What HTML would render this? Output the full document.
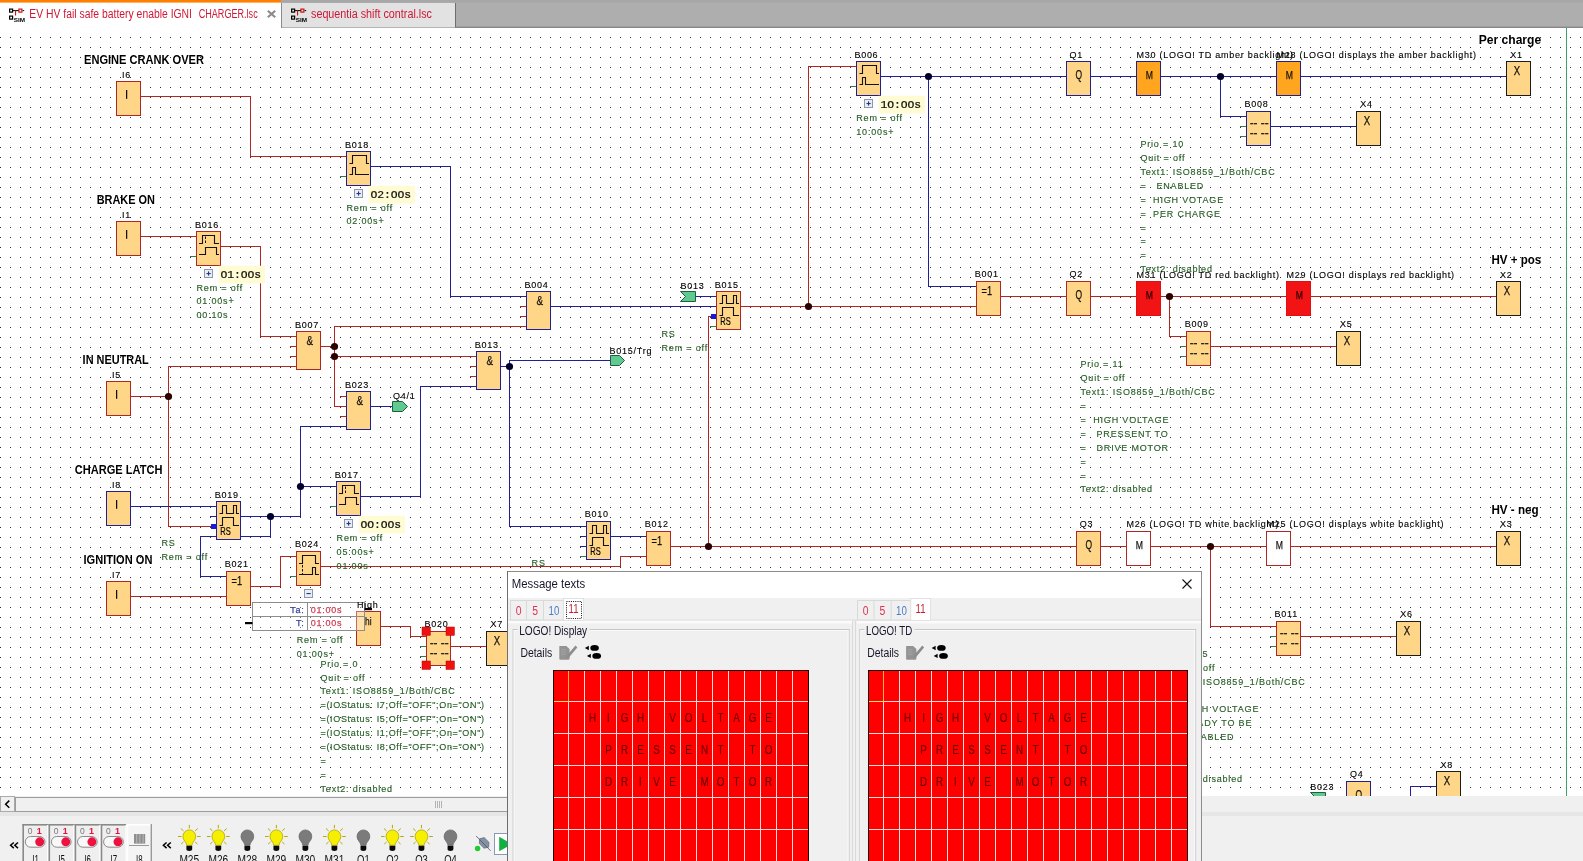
<!DOCTYPE html>
<html><head><meta charset="utf-8"><title>LOGO!Soft Comfort</title>
<style>
html,body{margin:0;padding:0;background:#fff;overflow:hidden}
body{width:1583px;height:861px;font-family:"Liberation Sans",sans-serif}

</style></head><body>
<svg width="1583" height="861" viewBox="0 0 1583 861" style="display:block">
<defs>
<pattern id="grid" x="0" y="7" width="10" height="10" patternUnits="userSpaceOnUse"><rect x="0" y="0" width="1" height="1" fill="#2e2e2e"/></pattern>
<filter id="soft" x="-5%" y="-10%" width="110%" height="120%"><feGaussianBlur stdDeviation="0.7"/></filter>
<clipPath id="canvasclip"><rect x="0" y="28" width="1583" height="768"/></clipPath>
</defs>
<rect x="0" y="0" width="1583" height="861" fill="#fff"/>
<g opacity="0.999">
<rect x="0" y="37" width="1583" height="759" fill="url(#grid)"/>
<g clip-path="url(#canvasclip)">
<rect x="1566" y="28" width="1" height="769" fill="#3aa06e"/>
<rect x="141" y="96" width="110" height="1" fill="#af2723"/>
<rect x="250" y="96" width="1" height="61" fill="#af2723"/>
<rect x="250" y="156" width="96" height="1" fill="#af2723"/>
<rect x="141" y="236" width="55" height="1" fill="#af2723"/>
<rect x="221" y="246" width="40" height="1" fill="#af2723"/>
<rect x="260" y="246" width="1" height="91" fill="#af2723"/>
<rect x="260" y="336" width="36" height="1" fill="#af2723"/>
<rect x="290" y="346" width="6" height="1" fill="#af2723"/>
<rect x="290" y="356" width="6" height="1" fill="#af2723"/>
<rect x="131" y="396" width="38" height="1" fill="#af2723"/>
<rect x="168" y="366" width="128" height="1" fill="#af2723"/>
<rect x="168" y="366" width="1" height="161" fill="#af2723"/>
<rect x="168" y="526" width="44" height="1" fill="#af2723"/>
<rect x="321" y="346" width="14" height="1" fill="#af2723"/>
<rect x="334" y="326" width="192" height="1" fill="#af2723"/>
<rect x="334" y="326" width="1" height="81" fill="#af2723"/>
<rect x="334" y="406" width="12" height="1" fill="#af2723"/>
<rect x="334" y="356" width="142" height="1" fill="#af2723"/>
<rect x="340" y="396" width="6" height="1" fill="#af2723"/>
<rect x="340" y="416" width="6" height="1" fill="#af2723"/>
<rect x="520" y="306" width="6" height="1" fill="#af2723"/>
<rect x="520" y="316" width="6" height="1" fill="#af2723"/>
<rect x="470" y="366" width="6" height="1" fill="#af2723"/>
<rect x="470" y="376" width="6" height="1" fill="#af2723"/>
<rect x="741" y="306" width="235" height="1" fill="#af2723"/>
<rect x="808" y="66" width="48" height="1" fill="#af2723"/>
<rect x="808" y="66" width="1" height="241" fill="#af2723"/>
<rect x="1001" y="296" width="65" height="1" fill="#af2723"/>
<rect x="1091" y="296" width="45" height="1" fill="#af2723"/>
<rect x="1161" y="296" width="125" height="1" fill="#af2723"/>
<rect x="1169" y="296" width="1" height="41" fill="#af2723"/>
<rect x="1169" y="336" width="17" height="1" fill="#af2723"/>
<rect x="1311" y="296" width="185" height="1" fill="#af2723"/>
<rect x="1211" y="346" width="125" height="1" fill="#af2723"/>
<rect x="708" y="316" width="4" height="1" fill="#af2723"/>
<rect x="708" y="316" width="1" height="231" fill="#af2723"/>
<rect x="671" y="546" width="405" height="1" fill="#af2723"/>
<rect x="1101" y="546" width="25" height="1" fill="#af2723"/>
<rect x="1151" y="546" width="115" height="1" fill="#af2723"/>
<rect x="1291" y="546" width="205" height="1" fill="#af2723"/>
<rect x="1210" y="546" width="1" height="81" fill="#af2723"/>
<rect x="1210" y="626" width="66" height="1" fill="#af2723"/>
<rect x="1301" y="636" width="95" height="1" fill="#af2723"/>
<rect x="131" y="596" width="95" height="1" fill="#af2723"/>
<rect x="251" y="586" width="30" height="1" fill="#af2723"/>
<rect x="280" y="556" width="1" height="31" fill="#af2723"/>
<rect x="280" y="556" width="16" height="1" fill="#af2723"/>
<rect x="321" y="566" width="300" height="1" fill="#af2723"/>
<rect x="620" y="556" width="1" height="11" fill="#af2723"/>
<rect x="620" y="556" width="26" height="1" fill="#af2723"/>
<rect x="381" y="626" width="30" height="1" fill="#af2723"/>
<rect x="410" y="626" width="1" height="11" fill="#af2723"/>
<rect x="410" y="636" width="16" height="1" fill="#af2723"/>
<rect x="451" y="646" width="35" height="1" fill="#af2723"/>
<rect x="371" y="166" width="80" height="1" fill="#1f1f98"/>
<rect x="450" y="166" width="1" height="131" fill="#1f1f98"/>
<rect x="450" y="296" width="76" height="1" fill="#1f1f98"/>
<rect x="551" y="306" width="165" height="1" fill="#1f1f98"/>
<rect x="696" y="296" width="20" height="1" fill="#1f1f98"/>
<rect x="501" y="366" width="9" height="1" fill="#1f1f98"/>
<rect x="509" y="360" width="101" height="1" fill="#1f1f98"/>
<rect x="509" y="360" width="1" height="167" fill="#1f1f98"/>
<rect x="509" y="526" width="77" height="1" fill="#1f1f98"/>
<rect x="420" y="386" width="56" height="1" fill="#1f1f98"/>
<rect x="420" y="386" width="1" height="111" fill="#1f1f98"/>
<rect x="361" y="496" width="60" height="1" fill="#1f1f98"/>
<rect x="371" y="406" width="22" height="1" fill="#1f1f98"/>
<rect x="300" y="426" width="46" height="1" fill="#1f1f98"/>
<rect x="300" y="426" width="1" height="91" fill="#1f1f98"/>
<rect x="241" y="516" width="60" height="1" fill="#1f1f98"/>
<rect x="300" y="486" width="36" height="1" fill="#1f1f98"/>
<rect x="270" y="516" width="1" height="21" fill="#1f1f98"/>
<rect x="200" y="536" width="71" height="1" fill="#1f1f98"/>
<rect x="200" y="536" width="1" height="41" fill="#1f1f98"/>
<rect x="200" y="576" width="26" height="1" fill="#1f1f98"/>
<rect x="131" y="506" width="85" height="1" fill="#1f1f98"/>
<rect x="210" y="516" width="6" height="1" fill="#1f1f98"/>
<rect x="580" y="536" width="6" height="1" fill="#1f1f98"/>
<rect x="580" y="546" width="6" height="1" fill="#1f1f98"/>
<rect x="611" y="536" width="35" height="1" fill="#1f1f98"/>
<rect x="881" y="76" width="185" height="1" fill="#1f1f98"/>
<rect x="928" y="76" width="1" height="211" fill="#1f1f98"/>
<rect x="928" y="286" width="48" height="1" fill="#1f1f98"/>
<rect x="1091" y="76" width="45" height="1" fill="#1f1f98"/>
<rect x="1161" y="76" width="115" height="1" fill="#1f1f98"/>
<rect x="1220" y="76" width="1" height="41" fill="#1f1f98"/>
<rect x="1220" y="116" width="26" height="1" fill="#1f1f98"/>
<rect x="1301" y="76" width="205" height="1" fill="#1f1f98"/>
<rect x="1271" y="126" width="85" height="1" fill="#1f1f98"/>
<rect x="1410" y="786" width="26" height="1" fill="#1f1f98"/>
<rect x="1410" y="786" width="1" height="15" fill="#1f1f98"/>
<rect x="340" y="176" width="6" height="1" fill="#2f7d4a"/>
<rect x="190" y="256" width="6" height="1" fill="#2f7d4a"/>
<rect x="850" y="86" width="6" height="1" fill="#2f7d4a"/>
<rect x="330" y="506" width="6" height="1" fill="#2f7d4a"/>
<rect x="290" y="576" width="6" height="1" fill="#2f7d4a"/>
<rect x="710" y="326" width="6" height="1" fill="#2f7d4a"/>
<rect x="580" y="556" width="6" height="1" fill="#2f7d4a"/>
<rect x="1240" y="126" width="6" height="1" fill="#2f7d4a"/>
<rect x="1240" y="136" width="6" height="1" fill="#2f7d4a"/>
<rect x="1180" y="346" width="6" height="1" fill="#2f7d4a"/>
<rect x="1180" y="356" width="6" height="1" fill="#2f7d4a"/>
<rect x="1270" y="636" width="6" height="1" fill="#2f7d4a"/>
<rect x="1270" y="646" width="6" height="1" fill="#2f7d4a"/>
<rect x="420" y="646" width="6" height="1" fill="#2f7d4a"/>
<rect x="420" y="656" width="6" height="1" fill="#2f7d4a"/>
<rect x="711" y="314" width="5" height="5" fill="#1818e0"/>
<rect x="211" y="524" width="5" height="5" fill="#1818e0"/>
<circle cx="168.5" cy="396.5" r="3.6" fill="#2a0000"/>
<circle cx="334.5" cy="346.5" r="3.6" fill="#2a0000"/>
<circle cx="334.5" cy="356.5" r="3.6" fill="#2a0000"/>
<circle cx="808.5" cy="306.5" r="3.6" fill="#2a0000"/>
<circle cx="1169.5" cy="296.5" r="3.6" fill="#2a0000"/>
<circle cx="708.5" cy="546.5" r="3.6" fill="#2a0000"/>
<circle cx="1210.5" cy="546.5" r="3.6" fill="#2a0000"/>
<circle cx="509.5" cy="366.5" r="3.6" fill="#00002a"/>
<circle cx="300.5" cy="486.5" r="3.6" fill="#00002a"/>
<circle cx="270.5" cy="516.5" r="3.6" fill="#00002a"/>
<circle cx="928.5" cy="76.5" r="3.6" fill="#00002a"/>
<circle cx="1220.5" cy="76.5" r="3.6" fill="#00002a"/>
<text x="346.5" y="210.5" font-family="Liberation Sans" font-size="9" fill="#2c622c" letter-spacing="0.82" stroke="#2c622c" stroke-width="0.16" style="white-space:pre">Rem = off</text>
<text x="346.5" y="224.4" font-family="Liberation Sans" font-size="9" fill="#2c622c" letter-spacing="0.82" stroke="#2c622c" stroke-width="0.16" style="white-space:pre">02:00s+</text>
<text x="196.5" y="290.5" font-family="Liberation Sans" font-size="9" fill="#2c622c" letter-spacing="0.82" stroke="#2c622c" stroke-width="0.16" style="white-space:pre">Rem = off</text>
<text x="196.5" y="304.4" font-family="Liberation Sans" font-size="9" fill="#2c622c" letter-spacing="0.82" stroke="#2c622c" stroke-width="0.16" style="white-space:pre">01:00s+</text>
<text x="196.5" y="318.4" font-family="Liberation Sans" font-size="9" fill="#2c622c" letter-spacing="0.82" stroke="#2c622c" stroke-width="0.16" style="white-space:pre">00:10s</text>
<text x="856.3" y="120.6" font-family="Liberation Sans" font-size="9" fill="#2c622c" letter-spacing="0.82" stroke="#2c622c" stroke-width="0.16" style="white-space:pre">Rem = off</text>
<text x="856.3" y="134.5" font-family="Liberation Sans" font-size="9" fill="#2c622c" letter-spacing="0.82" stroke="#2c622c" stroke-width="0.16" style="white-space:pre">10:00s+</text>
<text x="661.5" y="336.6" font-family="Liberation Sans" font-size="9" fill="#2c622c" letter-spacing="0.82" stroke="#2c622c" stroke-width="0.16" style="white-space:pre">RS</text>
<text x="661.5" y="350.6" font-family="Liberation Sans" font-size="9" fill="#2c622c" letter-spacing="0.82" stroke="#2c622c" stroke-width="0.16" style="white-space:pre">Rem = off</text>
<text x="161.5" y="546.4" font-family="Liberation Sans" font-size="9" fill="#2c622c" letter-spacing="0.82" stroke="#2c622c" stroke-width="0.16" style="white-space:pre">RS</text>
<text x="161.5" y="560.4" font-family="Liberation Sans" font-size="9" fill="#2c622c" letter-spacing="0.82" stroke="#2c622c" stroke-width="0.16" style="white-space:pre">Rem = off</text>
<text x="336.6" y="540.7" font-family="Liberation Sans" font-size="9" fill="#2c622c" letter-spacing="0.82" stroke="#2c622c" stroke-width="0.16" style="white-space:pre">Rem = off</text>
<text x="336.6" y="554.7" font-family="Liberation Sans" font-size="9" fill="#2c622c" letter-spacing="0.82" stroke="#2c622c" stroke-width="0.16" style="white-space:pre">05:00s+</text>
<text x="336.6" y="568.6" font-family="Liberation Sans" font-size="9" fill="#2c622c" letter-spacing="0.82" stroke="#2c622c" stroke-width="0.16" style="white-space:pre">01:00s</text>
<text x="296.8" y="642.5" font-family="Liberation Sans" font-size="9" fill="#2c622c" letter-spacing="0.82" stroke="#2c622c" stroke-width="0.16" style="white-space:pre">Rem = off</text>
<text x="296.8" y="656.5" font-family="Liberation Sans" font-size="9" fill="#2c622c" letter-spacing="0.82" stroke="#2c622c" stroke-width="0.16" style="white-space:pre">01:00s+</text>
<text x="531.6" y="565.8" font-family="Liberation Sans" font-size="9" fill="#2c622c" letter-spacing="0.82" stroke="#2c622c" stroke-width="0.16" style="white-space:pre">RS</text>
<text x="531.6" y="579.8" font-family="Liberation Sans" font-size="9" fill="#2c622c" letter-spacing="0.82" stroke="#2c622c" stroke-width="0.16" style="white-space:pre">Rem = off</text>
<text x="1140.4" y="146.8" font-family="Liberation Sans" font-size="9" fill="#2c622c" letter-spacing="0.82" stroke="#2c622c" stroke-width="0.16" style="white-space:pre">Prio = 10</text>
<text x="1140.4" y="160.8" font-family="Liberation Sans" font-size="9" fill="#2c622c" letter-spacing="0.82" stroke="#2c622c" stroke-width="0.16" style="white-space:pre">Quit = off</text>
<text x="1140.4" y="174.7" font-family="Liberation Sans" font-size="9" fill="#2c622c" letter-spacing="0.82" stroke="#2c622c" stroke-width="0.16" style="white-space:pre">Text1: ISO8859_1/Both/CBC</text>
<text x="1140.4" y="188.7" font-family="Liberation Sans" font-size="9" fill="#2c622c" letter-spacing="0.82" stroke="#2c622c" stroke-width="0.16" style="white-space:pre">=   ENABLED</text>
<text x="1140.4" y="202.6" font-family="Liberation Sans" font-size="9" fill="#2c622c" letter-spacing="0.82" stroke="#2c622c" stroke-width="0.16" style="white-space:pre">=  HIGH VOTAGE</text>
<text x="1140.4" y="216.6" font-family="Liberation Sans" font-size="9" fill="#2c622c" letter-spacing="0.82" stroke="#2c622c" stroke-width="0.16" style="white-space:pre">=  PER CHARGE</text>
<text x="1140.4" y="230.5" font-family="Liberation Sans" font-size="9" fill="#2c622c" letter-spacing="0.82" stroke="#2c622c" stroke-width="0.16" style="white-space:pre">=</text>
<text x="1140.4" y="244.4" font-family="Liberation Sans" font-size="9" fill="#2c622c" letter-spacing="0.82" stroke="#2c622c" stroke-width="0.16" style="white-space:pre">=</text>
<text x="1140.4" y="258.4" font-family="Liberation Sans" font-size="9" fill="#2c622c" letter-spacing="0.82" stroke="#2c622c" stroke-width="0.16" style="white-space:pre">=</text>
<text x="1140.4" y="272.4" font-family="Liberation Sans" font-size="9" fill="#2c622c" letter-spacing="0.82" stroke="#2c622c" stroke-width="0.16" style="white-space:pre">Text2: disabled</text>
<text x="1080.5" y="366.9" font-family="Liberation Sans" font-size="9" fill="#2c622c" letter-spacing="0.82" stroke="#2c622c" stroke-width="0.16" style="white-space:pre">Prio = 11</text>
<text x="1080.5" y="380.8" font-family="Liberation Sans" font-size="9" fill="#2c622c" letter-spacing="0.82" stroke="#2c622c" stroke-width="0.16" style="white-space:pre">Quit = off</text>
<text x="1080.5" y="394.8" font-family="Liberation Sans" font-size="9" fill="#2c622c" letter-spacing="0.82" stroke="#2c622c" stroke-width="0.16" style="white-space:pre">Text1: ISO8859_1/Both/CBC</text>
<text x="1080.5" y="408.8" font-family="Liberation Sans" font-size="9" fill="#2c622c" letter-spacing="0.82" stroke="#2c622c" stroke-width="0.16" style="white-space:pre">=</text>
<text x="1080.5" y="422.7" font-family="Liberation Sans" font-size="9" fill="#2c622c" letter-spacing="0.82" stroke="#2c622c" stroke-width="0.16" style="white-space:pre">=  HIGH VOLTAGE</text>
<text x="1080.5" y="436.6" font-family="Liberation Sans" font-size="9" fill="#2c622c" letter-spacing="0.82" stroke="#2c622c" stroke-width="0.16" style="white-space:pre">=   PRESSENT TO</text>
<text x="1080.5" y="450.6" font-family="Liberation Sans" font-size="9" fill="#2c622c" letter-spacing="0.82" stroke="#2c622c" stroke-width="0.16" style="white-space:pre">=   DRIVE MOTOR</text>
<text x="1080.5" y="464.5" font-family="Liberation Sans" font-size="9" fill="#2c622c" letter-spacing="0.82" stroke="#2c622c" stroke-width="0.16" style="white-space:pre">=</text>
<text x="1080.5" y="478.5" font-family="Liberation Sans" font-size="9" fill="#2c622c" letter-spacing="0.82" stroke="#2c622c" stroke-width="0.16" style="white-space:pre">=</text>
<text x="1080.5" y="492.4" font-family="Liberation Sans" font-size="9" fill="#2c622c" letter-spacing="0.82" stroke="#2c622c" stroke-width="0.16" style="white-space:pre">Text2: disabled</text>
<text x="320.5" y="666.5" font-family="Liberation Sans" font-size="9" fill="#2c622c" letter-spacing="0.82" stroke="#2c622c" stroke-width="0.16" style="white-space:pre">Prio = 0</text>
<text x="320.5" y="680.5" font-family="Liberation Sans" font-size="9" fill="#2c622c" letter-spacing="0.82" stroke="#2c622c" stroke-width="0.16" style="white-space:pre">Quit = off</text>
<text x="320.5" y="694.4" font-family="Liberation Sans" font-size="9" fill="#2c622c" letter-spacing="0.82" stroke="#2c622c" stroke-width="0.16" style="white-space:pre">Text1: ISO8859_1/Both/CBC</text>
<text x="320.5" y="708.4" font-family="Liberation Sans" font-size="9" fill="#2c622c" textLength="163.5" lengthAdjust="spacing" stroke="#2c622c" stroke-width="0.16" style="white-space:pre">=(IOStatus: I7;Off=&quot;OFF&quot;;On=&quot;ON&quot;)</text>
<text x="320.5" y="722.3" font-family="Liberation Sans" font-size="9" fill="#2c622c" textLength="163.5" lengthAdjust="spacing" stroke="#2c622c" stroke-width="0.16" style="white-space:pre">=(IOStatus: I5;Off=&quot;OFF&quot;;On=&quot;ON&quot;)</text>
<text x="320.5" y="736.2" font-family="Liberation Sans" font-size="9" fill="#2c622c" textLength="163.5" lengthAdjust="spacing" stroke="#2c622c" stroke-width="0.16" style="white-space:pre">=(IOStatus: I1;Off=&quot;OFF&quot;;On=&quot;ON&quot;)</text>
<text x="320.5" y="750.2" font-family="Liberation Sans" font-size="9" fill="#2c622c" textLength="163.5" lengthAdjust="spacing" stroke="#2c622c" stroke-width="0.16" style="white-space:pre">=(IOStatus: I8;Off=&quot;OFF&quot;;On=&quot;ON&quot;)</text>
<text x="320.5" y="764.1" font-family="Liberation Sans" font-size="9" fill="#2c622c" letter-spacing="0.82" stroke="#2c622c" stroke-width="0.16" style="white-space:pre">=</text>
<text x="320.5" y="778.1" font-family="Liberation Sans" font-size="9" fill="#2c622c" letter-spacing="0.82" stroke="#2c622c" stroke-width="0.16" style="white-space:pre">=</text>
<text x="320.5" y="792.0" font-family="Liberation Sans" font-size="9" fill="#2c622c" letter-spacing="0.82" stroke="#2c622c" stroke-width="0.16" style="white-space:pre">Text2: disabled</text>
<text x="1170.5" y="656.6" font-family="Liberation Sans" font-size="9" fill="#2c622c" letter-spacing="0.82" stroke="#2c622c" stroke-width="0.16" style="white-space:pre">Prio = 5</text>
<text x="1170.5" y="670.6" font-family="Liberation Sans" font-size="9" fill="#2c622c" letter-spacing="0.82" stroke="#2c622c" stroke-width="0.16" style="white-space:pre">Quit = off</text>
<text x="1170.5" y="684.5" font-family="Liberation Sans" font-size="9" fill="#2c622c" letter-spacing="0.82" stroke="#2c622c" stroke-width="0.16" style="white-space:pre">Text1: ISO8859_1/Both/CBC</text>
<text x="1170.5" y="698.5" font-family="Liberation Sans" font-size="9" fill="#2c622c" letter-spacing="0.82" stroke="#2c622c" stroke-width="0.16" style="white-space:pre">=</text>
<text x="1170.5" y="712.4" font-family="Liberation Sans" font-size="9" fill="#2c622c" letter-spacing="0.82" stroke="#2c622c" stroke-width="0.16" style="white-space:pre">=  HIGH VOLTAGE</text>
<text x="1170.5" y="726.4" font-family="Liberation Sans" font-size="9" fill="#2c622c" letter-spacing="0.82" stroke="#2c622c" stroke-width="0.16" style="white-space:pre">=  READY TO BE</text>
<text x="1170.5" y="740.3" font-family="Liberation Sans" font-size="9" fill="#2c622c" letter-spacing="0.82" stroke="#2c622c" stroke-width="0.16" style="white-space:pre">=   ENABLED</text>
<text x="1170.5" y="754.2" font-family="Liberation Sans" font-size="9" fill="#2c622c" letter-spacing="0.82" stroke="#2c622c" stroke-width="0.16" style="white-space:pre">=</text>
<text x="1170.5" y="768.2" font-family="Liberation Sans" font-size="9" fill="#2c622c" letter-spacing="0.82" stroke="#2c622c" stroke-width="0.16" style="white-space:pre">=</text>
<text x="1170.5" y="782.1" font-family="Liberation Sans" font-size="9" fill="#2c622c" letter-spacing="0.82" stroke="#2c622c" stroke-width="0.16" style="white-space:pre">Text2: disabled</text>
<rect x="116.5" y="81.5" width="24" height="34" fill="#ffd688" stroke="#af2723" stroke-width="1" shape-rendering="crispEdges"/>
<rect x="126" y="90" width="1.25" height="8.8" fill="#111"/>
<rect x="116.5" y="221.5" width="24" height="34" fill="#ffd688" stroke="#af2723" stroke-width="1" shape-rendering="crispEdges"/>
<rect x="126" y="230" width="1.25" height="8.8" fill="#111"/>
<rect x="106.5" y="381.5" width="24" height="34" fill="#ffd688" stroke="#af2723" stroke-width="1" shape-rendering="crispEdges"/>
<rect x="116" y="390" width="1.25" height="8.8" fill="#111"/>
<rect x="106.5" y="491.5" width="24" height="34" fill="#ffd688" stroke="#1f1f98" stroke-width="1" shape-rendering="crispEdges"/>
<rect x="116" y="500" width="1.25" height="8.8" fill="#111"/>
<rect x="106.5" y="581.5" width="24" height="34" fill="#ffd688" stroke="#af2723" stroke-width="1" shape-rendering="crispEdges"/>
<rect x="116" y="590" width="1.25" height="8.8" fill="#111"/>
<rect x="346.5" y="151.5" width="24" height="34" fill="#ffd688" stroke="#1f1f98" stroke-width="1" shape-rendering="crispEdges"/>
<path d="M349.5,163.5H352.5V155.5H366.5V163.5H369 M349.5,174.5H352.5V167.5H355.5V174.5H369" fill="none" stroke="#111" stroke-width="1.1"/>
<rect x="196.5" y="231.5" width="24" height="34" fill="#ffd688" stroke="#af2723" stroke-width="1" shape-rendering="crispEdges"/>
<path d="M199,243.5H202.5V235.5H214.5V243.5H219 M199,254.5H205.5V247.5H216.5V254.5H219" fill="none" stroke="#111" stroke-width="1.1"/>
<path d="M205.5,236.5V244" fill="none" stroke="#111" stroke-width="1" stroke-dasharray="2.5,1.5"/>
<rect x="296.5" y="331.5" width="24" height="38" fill="#ffd688" stroke="#af2723" stroke-width="1" shape-rendering="crispEdges"/>
<text x="306.4" y="344.5" font-family="Liberation Sans" font-size="12" fill="#111" textLength="6.6" lengthAdjust="spacingAndGlyphs" stroke="#111" stroke-width="0.25" style="white-space:pre">&amp;</text>
<rect x="346.5" y="391.5" width="24" height="38" fill="#ffd688" stroke="#1f1f98" stroke-width="1" shape-rendering="crispEdges"/>
<text x="356.4" y="404.5" font-family="Liberation Sans" font-size="12" fill="#111" textLength="6.6" lengthAdjust="spacingAndGlyphs" stroke="#111" stroke-width="0.25" style="white-space:pre">&amp;</text>
<rect x="526.5" y="291.5" width="24" height="38" fill="#ffd688" stroke="#1f1f98" stroke-width="1" shape-rendering="crispEdges"/>
<text x="536.4" y="304.5" font-family="Liberation Sans" font-size="12" fill="#111" textLength="6.6" lengthAdjust="spacingAndGlyphs" stroke="#111" stroke-width="0.25" style="white-space:pre">&amp;</text>
<rect x="476.5" y="351.5" width="24" height="38" fill="#ffd688" stroke="#1f1f98" stroke-width="1" shape-rendering="crispEdges"/>
<text x="486.4" y="364.5" font-family="Liberation Sans" font-size="12" fill="#111" textLength="6.6" lengthAdjust="spacingAndGlyphs" stroke="#111" stroke-width="0.25" style="white-space:pre">&amp;</text>
<rect x="716.5" y="291.5" width="24" height="38" fill="#ffd688" stroke="#af2723" stroke-width="1" shape-rendering="crispEdges"/>
<path d="M719.5,303.5H722.5V295.5H726.5V303.5H733.5V295.5H736.5V303.5H739 M719.5,315.5H722.5V307.5H733.5V315.5H739" fill="none" stroke="#111" stroke-width="1.1"/>
<text x="720.3" y="325" font-family="Liberation Sans" font-size="10.5" fill="#000" textLength="10.5" lengthAdjust="spacingAndGlyphs" stroke="#000" stroke-width="0.2" style="white-space:pre">RS</text>
<rect x="216.5" y="501.5" width="24" height="38" fill="#ffd688" stroke="#1f1f98" stroke-width="1" shape-rendering="crispEdges"/>
<path d="M219.5,513.5H222.5V505.5H226.5V513.5H233.5V505.5H236.5V513.5H239 M219.5,525.5H222.5V517.5H233.5V525.5H239" fill="none" stroke="#111" stroke-width="1.1"/>
<text x="220.3" y="535" font-family="Liberation Sans" font-size="10.5" fill="#000" textLength="10.5" lengthAdjust="spacingAndGlyphs" stroke="#000" stroke-width="0.2" style="white-space:pre">RS</text>
<rect x="586.5" y="521.5" width="24" height="38" fill="#ffd688" stroke="#1f1f98" stroke-width="1" shape-rendering="crispEdges"/>
<path d="M589.5,533.5H592.5V525.5H596.5V533.5H603.5V525.5H606.5V533.5H609 M589.5,545.5H592.5V537.5H603.5V545.5H609" fill="none" stroke="#111" stroke-width="1.1"/>
<text x="590.3" y="555" font-family="Liberation Sans" font-size="10.5" fill="#000" textLength="10.5" lengthAdjust="spacingAndGlyphs" stroke="#000" stroke-width="0.2" style="white-space:pre">RS</text>
<rect x="336.5" y="481.5" width="24" height="34" fill="#ffd688" stroke="#1f1f98" stroke-width="1" shape-rendering="crispEdges"/>
<path d="M339,493.5H342.5V485.5H354.5V493.5H359 M339,504.5H345.5V497.5H356.5V504.5H359" fill="none" stroke="#111" stroke-width="1.1"/>
<path d="M345.5,486.5V494" fill="none" stroke="#111" stroke-width="1" stroke-dasharray="2.5,1.5"/>
<rect x="226.5" y="571.5" width="24" height="34" fill="#ffd688" stroke="#af2723" stroke-width="1" shape-rendering="crispEdges"/>
<text x="231.6" y="584.6" font-family="Liberation Sans" font-size="12" fill="#111" textLength="10.5" lengthAdjust="spacingAndGlyphs" stroke="#111" stroke-width="0.25" style="white-space:pre">=1</text>
<rect x="296.5" y="551.5" width="24" height="34" fill="#ffd688" stroke="#af2723" stroke-width="1" shape-rendering="crispEdges"/>
<path d="M299,563.5H302.5V555.5H315.5V563.5H319 M299,574.5H312.5V567.5H315.5V574.5H319" fill="none" stroke="#111" stroke-width="1.1"/>
<path d="M302.5,565V574" fill="none" stroke="#111" stroke-width="1" stroke-dasharray="2.5,1.5"/>
<rect x="356.5" y="611.5" width="24" height="34" fill="#ffd688" stroke="#af2723" stroke-width="1" shape-rendering="crispEdges"/>
<text x="365" y="624.5" font-family="Liberation Sans" font-size="11.5" fill="#111" textLength="6.5" lengthAdjust="spacingAndGlyphs" stroke="#111" stroke-width="0.25" style="white-space:pre">hi</text>
<rect x="426.5" y="631.5" width="24" height="34" fill="#ffd688" stroke="#af2723" stroke-width="1" shape-rendering="crispEdges"/>
<rect x="430.2" y="643.1" width="3.1" height="1.2" fill="#111"/>
<rect x="433.9" y="643.1" width="3.1" height="1.2" fill="#111"/>
<rect x="441.1" y="643.1" width="3.3" height="1.2" fill="#111"/>
<rect x="445.1" y="643.1" width="3.3" height="1.2" fill="#111"/>
<rect x="430.2" y="653.1" width="3.1" height="1.2" fill="#111"/>
<rect x="433.9" y="653.1" width="3.1" height="1.2" fill="#111"/>
<rect x="441.1" y="653.1" width="3.3" height="1.2" fill="#111"/>
<rect x="445.1" y="653.1" width="3.3" height="1.2" fill="#111"/>
<rect x="486.5" y="631.5" width="24" height="34" fill="#ffd688" stroke="#1c1c1c" stroke-width="1" shape-rendering="crispEdges"/>
<text x="493.8" y="645" font-family="Liberation Sans" font-size="12" fill="#111" textLength="6.4" lengthAdjust="spacingAndGlyphs" stroke="#111" stroke-width="0.25" style="white-space:pre">X</text>
<rect x="646.5" y="531.5" width="24" height="34" fill="#ffd688" stroke="#af2723" stroke-width="1" shape-rendering="crispEdges"/>
<text x="651.6" y="544.6" font-family="Liberation Sans" font-size="12" fill="#111" textLength="10.5" lengthAdjust="spacingAndGlyphs" stroke="#111" stroke-width="0.25" style="white-space:pre">=1</text>
<rect x="856.5" y="61.5" width="24" height="34" fill="#ffd688" stroke="#1f1f98" stroke-width="1" shape-rendering="crispEdges"/>
<path d="M859.5,73.5H862.5V65.5H876.5V73.5H879 M859.5,84.5H862.5V77.5H865.5V84.5H879" fill="none" stroke="#111" stroke-width="1.1"/>
<rect x="1066.5" y="61.5" width="24" height="34" fill="#ffd688" stroke="#1f1f98" stroke-width="1" shape-rendering="crispEdges"/>
<text x="1075.6" y="79" font-family="Liberation Sans" font-size="12" fill="#111" textLength="6.6" lengthAdjust="spacingAndGlyphs" stroke="#111" stroke-width="0.25" style="white-space:pre">Q</text>
<rect x="1136.5" y="61.5" width="24" height="34" fill="#ffa61e" stroke="#1f1f98" stroke-width="1" shape-rendering="crispEdges"/>
<text x="1145.8" y="78.6" font-family="Liberation Sans" font-size="11.5" fill="#111" textLength="7.2" lengthAdjust="spacingAndGlyphs" stroke="#111" stroke-width="0.25" style="white-space:pre">M</text>
<rect x="1276.5" y="61.5" width="24" height="34" fill="#ffa61e" stroke="#1f1f98" stroke-width="1" shape-rendering="crispEdges"/>
<text x="1285.8" y="78.6" font-family="Liberation Sans" font-size="11.5" fill="#111" textLength="7.2" lengthAdjust="spacingAndGlyphs" stroke="#111" stroke-width="0.25" style="white-space:pre">M</text>
<rect x="1506.5" y="61.5" width="24" height="34" fill="#ffd688" stroke="#1c1c1c" stroke-width="1" shape-rendering="crispEdges"/>
<text x="1513.8" y="75" font-family="Liberation Sans" font-size="12" fill="#111" textLength="6.4" lengthAdjust="spacingAndGlyphs" stroke="#111" stroke-width="0.25" style="white-space:pre">X</text>
<rect x="1246.5" y="111.5" width="24" height="34" fill="#ffd688" stroke="#1f1f98" stroke-width="1" shape-rendering="crispEdges"/>
<rect x="1250.2" y="123.1" width="3.1" height="1.2" fill="#111"/>
<rect x="1253.9" y="123.1" width="3.1" height="1.2" fill="#111"/>
<rect x="1261.1" y="123.1" width="3.3" height="1.2" fill="#111"/>
<rect x="1265.1" y="123.1" width="3.3" height="1.2" fill="#111"/>
<rect x="1250.2" y="133.1" width="3.1" height="1.2" fill="#111"/>
<rect x="1253.9" y="133.1" width="3.1" height="1.2" fill="#111"/>
<rect x="1261.1" y="133.1" width="3.3" height="1.2" fill="#111"/>
<rect x="1265.1" y="133.1" width="3.3" height="1.2" fill="#111"/>
<rect x="1356.5" y="111.5" width="24" height="34" fill="#ffd688" stroke="#1c1c1c" stroke-width="1" shape-rendering="crispEdges"/>
<text x="1363.8" y="125" font-family="Liberation Sans" font-size="12" fill="#111" textLength="6.4" lengthAdjust="spacingAndGlyphs" stroke="#111" stroke-width="0.25" style="white-space:pre">X</text>
<rect x="976.5" y="281.5" width="24" height="34" fill="#ffd688" stroke="#af2723" stroke-width="1" shape-rendering="crispEdges"/>
<text x="981.6" y="294.6" font-family="Liberation Sans" font-size="12" fill="#111" textLength="10.5" lengthAdjust="spacingAndGlyphs" stroke="#111" stroke-width="0.25" style="white-space:pre">=1</text>
<rect x="1066.5" y="281.5" width="24" height="34" fill="#ffd688" stroke="#af2723" stroke-width="1" shape-rendering="crispEdges"/>
<text x="1075.6" y="299" font-family="Liberation Sans" font-size="12" fill="#111" textLength="6.6" lengthAdjust="spacingAndGlyphs" stroke="#111" stroke-width="0.25" style="white-space:pre">Q</text>
<rect x="1136.5" y="281.5" width="24" height="34" fill="#f21414" stroke="#e01010" stroke-width="1" shape-rendering="crispEdges"/>
<text x="1145.8" y="298.6" font-family="Liberation Sans" font-size="11.5" fill="#2a0000" textLength="7.2" lengthAdjust="spacingAndGlyphs" stroke="#2a0000" stroke-width="0.25" style="white-space:pre">M</text>
<rect x="1286.5" y="281.5" width="24" height="34" fill="#f21414" stroke="#e01010" stroke-width="1" shape-rendering="crispEdges"/>
<text x="1295.8" y="298.6" font-family="Liberation Sans" font-size="11.5" fill="#2a0000" textLength="7.2" lengthAdjust="spacingAndGlyphs" stroke="#2a0000" stroke-width="0.25" style="white-space:pre">M</text>
<rect x="1496.5" y="281.5" width="24" height="34" fill="#ffd688" stroke="#1c1c1c" stroke-width="1" shape-rendering="crispEdges"/>
<text x="1503.8" y="295" font-family="Liberation Sans" font-size="12" fill="#111" textLength="6.4" lengthAdjust="spacingAndGlyphs" stroke="#111" stroke-width="0.25" style="white-space:pre">X</text>
<rect x="1186.5" y="331.5" width="24" height="34" fill="#ffd688" stroke="#af2723" stroke-width="1" shape-rendering="crispEdges"/>
<rect x="1190.2" y="343.1" width="3.1" height="1.2" fill="#111"/>
<rect x="1193.9" y="343.1" width="3.1" height="1.2" fill="#111"/>
<rect x="1201.1" y="343.1" width="3.3" height="1.2" fill="#111"/>
<rect x="1205.1" y="343.1" width="3.3" height="1.2" fill="#111"/>
<rect x="1190.2" y="353.1" width="3.1" height="1.2" fill="#111"/>
<rect x="1193.9" y="353.1" width="3.1" height="1.2" fill="#111"/>
<rect x="1201.1" y="353.1" width="3.3" height="1.2" fill="#111"/>
<rect x="1205.1" y="353.1" width="3.3" height="1.2" fill="#111"/>
<rect x="1336.5" y="331.5" width="24" height="34" fill="#ffd688" stroke="#1c1c1c" stroke-width="1" shape-rendering="crispEdges"/>
<text x="1343.8" y="345" font-family="Liberation Sans" font-size="12" fill="#111" textLength="6.4" lengthAdjust="spacingAndGlyphs" stroke="#111" stroke-width="0.25" style="white-space:pre">X</text>
<rect x="1076.5" y="531.5" width="24" height="34" fill="#ffd688" stroke="#af2723" stroke-width="1" shape-rendering="crispEdges"/>
<text x="1085.6" y="549" font-family="Liberation Sans" font-size="12" fill="#111" textLength="6.6" lengthAdjust="spacingAndGlyphs" stroke="#111" stroke-width="0.25" style="white-space:pre">Q</text>
<rect x="1126.5" y="531.5" width="24" height="34" fill="#fff" stroke="#af2723" stroke-width="1" shape-rendering="crispEdges"/>
<text x="1135.8" y="548.6" font-family="Liberation Sans" font-size="11.5" fill="#111" textLength="7.2" lengthAdjust="spacingAndGlyphs" stroke="#111" stroke-width="0.25" style="white-space:pre">M</text>
<rect x="1266.5" y="531.5" width="24" height="34" fill="#fff" stroke="#af2723" stroke-width="1" shape-rendering="crispEdges"/>
<text x="1275.8" y="548.6" font-family="Liberation Sans" font-size="11.5" fill="#111" textLength="7.2" lengthAdjust="spacingAndGlyphs" stroke="#111" stroke-width="0.25" style="white-space:pre">M</text>
<rect x="1496.5" y="531.5" width="24" height="34" fill="#ffd688" stroke="#1c1c1c" stroke-width="1" shape-rendering="crispEdges"/>
<text x="1503.8" y="545" font-family="Liberation Sans" font-size="12" fill="#111" textLength="6.4" lengthAdjust="spacingAndGlyphs" stroke="#111" stroke-width="0.25" style="white-space:pre">X</text>
<rect x="1276.5" y="621.5" width="24" height="34" fill="#ffd688" stroke="#af2723" stroke-width="1" shape-rendering="crispEdges"/>
<rect x="1280.2" y="633.1" width="3.1" height="1.2" fill="#111"/>
<rect x="1283.9" y="633.1" width="3.1" height="1.2" fill="#111"/>
<rect x="1291.1" y="633.1" width="3.3" height="1.2" fill="#111"/>
<rect x="1295.1" y="633.1" width="3.3" height="1.2" fill="#111"/>
<rect x="1280.2" y="643.1" width="3.1" height="1.2" fill="#111"/>
<rect x="1283.9" y="643.1" width="3.1" height="1.2" fill="#111"/>
<rect x="1291.1" y="643.1" width="3.3" height="1.2" fill="#111"/>
<rect x="1295.1" y="643.1" width="3.3" height="1.2" fill="#111"/>
<rect x="1396.5" y="621.5" width="24" height="34" fill="#ffd688" stroke="#1c1c1c" stroke-width="1" shape-rendering="crispEdges"/>
<text x="1403.8" y="635" font-family="Liberation Sans" font-size="12" fill="#111" textLength="6.4" lengthAdjust="spacingAndGlyphs" stroke="#111" stroke-width="0.25" style="white-space:pre">X</text>
<rect x="1346.5" y="781.5" width="24" height="34" fill="#ffd688" stroke="#1f1f98" stroke-width="1" shape-rendering="crispEdges"/>
<text x="1355.6" y="799" font-family="Liberation Sans" font-size="12" fill="#111" textLength="6.6" lengthAdjust="spacingAndGlyphs" stroke="#111" stroke-width="0.25" style="white-space:pre">Q</text>
<rect x="1436.5" y="771.5" width="24" height="34" fill="#ffd688" stroke="#1c1c1c" stroke-width="1" shape-rendering="crispEdges"/>
<text x="1443.8" y="785" font-family="Liberation Sans" font-size="12" fill="#111" textLength="6.4" lengthAdjust="spacingAndGlyphs" stroke="#111" stroke-width="0.25" style="white-space:pre">X</text>
<rect x="422" y="627" width="8.4" height="8.4" fill="#f01010" stroke="#b00000" stroke-width="0.5"/>
<rect x="446" y="627" width="8.4" height="8.4" fill="#f01010" stroke="#b00000" stroke-width="0.5"/>
<rect x="422" y="661" width="8.4" height="8.4" fill="#f01010" stroke="#b00000" stroke-width="0.5"/>
<rect x="446" y="661" width="8.4" height="8.4" fill="#f01010" stroke="#b00000" stroke-width="0.5"/>
<path d="M680.5,291.5H695.5V301.5H680.5L685.5,296.5Z" fill="#5fca8f" stroke="#1f5f3f" stroke-width="1"/>
<path d="M610.5,355.5H619.5L624.5,360.5L619.5,365.5H610.5Z" fill="#5fca8f" stroke="#1f5f3f" stroke-width="1"/>
<path d="M392.5,401.5H402.5L407.5,406.5L402.5,411.5H392.5Z" fill="#5fca8f" stroke="#1f5f3f" stroke-width="1"/>
<path d="M1310.5,792.5H1325.5V802.5H1310.5L1315.5,797.5Z" fill="#5fca8f" stroke="#1f5f3f" stroke-width="1"/>
<rect x="354.5" y="189.5" width="8" height="8" fill="#e9eef6" stroke="#8f98a8" stroke-width="1"/>
<rect x="356.5" y="193" width="4.2" height="1.1" fill="#26358a"/>
<rect x="358" y="191.4" width="1.1" height="4.2" fill="#26358a"/>
<rect x="368.6" y="185.8" width="46.2" height="17.6" fill="#fffbd2" filter="url(#soft)"/>
<text x="370.6" y="198.3" font-family="Liberation Mono" font-size="11.4" fill="#111" textLength="40.6" lengthAdjust="spacing" stroke="#111" stroke-width="0.22" style="white-space:pre">O2:OOs</text>
<rect x="204.5" y="269.5" width="8" height="8" fill="#e9eef6" stroke="#8f98a8" stroke-width="1"/>
<rect x="206.5" y="273" width="4.2" height="1.1" fill="#26358a"/>
<rect x="208" y="271.4" width="1.1" height="4.2" fill="#26358a"/>
<rect x="218.6" y="265.8" width="46.2" height="17.6" fill="#fffbd2" filter="url(#soft)"/>
<text x="220.6" y="278.3" font-family="Liberation Mono" font-size="11.4" fill="#111" textLength="40.6" lengthAdjust="spacing" stroke="#111" stroke-width="0.22" style="white-space:pre">O1:OOs</text>
<rect x="864.5" y="99.5" width="8" height="8" fill="#e9eef6" stroke="#8f98a8" stroke-width="1"/>
<rect x="866.5" y="103" width="4.2" height="1.1" fill="#26358a"/>
<rect x="868" y="101.4" width="1.1" height="4.2" fill="#26358a"/>
<rect x="878.6" y="95.8" width="46.2" height="17.6" fill="#fffbd2" filter="url(#soft)"/>
<text x="880.6" y="108.3" font-family="Liberation Mono" font-size="11.4" fill="#111" textLength="40.6" lengthAdjust="spacing" stroke="#111" stroke-width="0.22" style="white-space:pre">1O:OOs</text>
<rect x="344.5" y="519.5" width="8" height="8" fill="#e9eef6" stroke="#8f98a8" stroke-width="1"/>
<rect x="346.5" y="523" width="4.2" height="1.1" fill="#26358a"/>
<rect x="348" y="521.4" width="1.1" height="4.2" fill="#26358a"/>
<rect x="358.6" y="515.8" width="46.2" height="17.6" fill="#fffbd2" filter="url(#soft)"/>
<text x="360.6" y="528.3" font-family="Liberation Mono" font-size="11.4" fill="#111" textLength="40.6" lengthAdjust="spacing" stroke="#111" stroke-width="0.22" style="white-space:pre">OO:OOs</text>
<rect x="304.5" y="589.5" width="8" height="8" fill="#e9eef6" stroke="#8f98a8" stroke-width="1"/>
<rect x="306.5" y="593" width="4.2" height="1.1" fill="#26358a"/>
<rect x="252.5" y="602.5" width="112" height="28" fill="rgba(255,255,255,0.3)" stroke="#8c8c8c" stroke-width="1"/>
<rect x="253" y="616" width="112" height="1" fill="#8c8c8c"/>
<rect x="307" y="603" width="1" height="28" fill="#8c8c8c"/>
<text x="304.6" y="612.5" font-family="Liberation Sans" font-size="9" fill="#38459a" letter-spacing="0.75" text-anchor="end" stroke="#38459a" stroke-width="0.25" style="white-space:pre">Ta:</text>
<text x="304.6" y="626.3" font-family="Liberation Sans" font-size="9" fill="#38459a" letter-spacing="0.75" text-anchor="end" stroke="#38459a" stroke-width="0.25" style="white-space:pre">T:</text>
<text x="310.7" y="612.5" font-family="Liberation Sans" font-size="9" fill="#cf3f55" letter-spacing="0.75" stroke="#cf3f55" stroke-width="0.25" style="white-space:pre">01:00s</text>
<text x="310.7" y="626.3" font-family="Liberation Sans" font-size="9" fill="#cf3f55" letter-spacing="0.75" stroke="#cf3f55" stroke-width="0.25" style="white-space:pre">01:00s</text>
<rect x="245" y="622" width="7.5" height="2.2" fill="#000"/>
<rect x="364.5" y="608" width="7.5" height="2.2" fill="#000"/>
<text x="122" y="77.7" font-family="Liberation Sans" font-size="9" fill="#000" letter-spacing="0.74" stroke="#000" stroke-width="0.12" style="white-space:pre">I6</text>
<text x="122" y="217.7" font-family="Liberation Sans" font-size="9" fill="#000" letter-spacing="0.74" stroke="#000" stroke-width="0.12" style="white-space:pre">I1</text>
<text x="112" y="377.6" font-family="Liberation Sans" font-size="9" fill="#000" letter-spacing="0.74" stroke="#000" stroke-width="0.12" style="white-space:pre">I5</text>
<text x="112" y="487.7" font-family="Liberation Sans" font-size="9" fill="#000" letter-spacing="0.74" stroke="#000" stroke-width="0.12" style="white-space:pre">I8</text>
<text x="112" y="577.7" font-family="Liberation Sans" font-size="9" fill="#000" letter-spacing="0.74" stroke="#000" stroke-width="0.12" style="white-space:pre">I7</text>
<text x="345" y="147.7" font-family="Liberation Sans" font-size="9" fill="#000" letter-spacing="0.74" stroke="#000" stroke-width="0.12" style="white-space:pre">B018</text>
<text x="195" y="227.6" font-family="Liberation Sans" font-size="9" fill="#000" letter-spacing="0.74" stroke="#000" stroke-width="0.12" style="white-space:pre">B016</text>
<text x="295" y="327.6" font-family="Liberation Sans" font-size="9" fill="#000" letter-spacing="0.74" stroke="#000" stroke-width="0.12" style="white-space:pre">B007</text>
<text x="345" y="387.5" font-family="Liberation Sans" font-size="9" fill="#000" letter-spacing="0.74" stroke="#000" stroke-width="0.12" style="white-space:pre">B023</text>
<text x="524.6" y="287.7" font-family="Liberation Sans" font-size="9" fill="#000" letter-spacing="0.74" stroke="#000" stroke-width="0.12" style="white-space:pre">B004</text>
<text x="474.7" y="347.5" font-family="Liberation Sans" font-size="9" fill="#000" letter-spacing="0.74" stroke="#000" stroke-width="0.12" style="white-space:pre">B013</text>
<text x="714.7" y="287.7" font-family="Liberation Sans" font-size="9" fill="#000" letter-spacing="0.74" stroke="#000" stroke-width="0.12" style="white-space:pre">B015</text>
<text x="680.6" y="289" font-family="Liberation Sans" font-size="9" fill="#000" letter-spacing="0.74" stroke="#000" stroke-width="0.12" style="white-space:pre">B013</text>
<text x="609.6" y="353.8" font-family="Liberation Sans" font-size="9" fill="#000" letter-spacing="0.74" stroke="#000" stroke-width="0.12" style="white-space:pre">B015/Trg</text>
<text x="393" y="399.4" font-family="Liberation Sans" font-size="9" fill="#000" letter-spacing="0.74" stroke="#000" stroke-width="0.12" style="white-space:pre">Q4/1</text>
<text x="214.7" y="497.5" font-family="Liberation Sans" font-size="9" fill="#000" letter-spacing="0.74" stroke="#000" stroke-width="0.12" style="white-space:pre">B019</text>
<text x="334.7" y="477.5" font-family="Liberation Sans" font-size="9" fill="#000" letter-spacing="0.74" stroke="#000" stroke-width="0.12" style="white-space:pre">B017</text>
<text x="224.8" y="567.4" font-family="Liberation Sans" font-size="9" fill="#000" letter-spacing="0.74" stroke="#000" stroke-width="0.12" style="white-space:pre">B021</text>
<text x="295" y="547.4" font-family="Liberation Sans" font-size="9" fill="#000" letter-spacing="0.74" stroke="#000" stroke-width="0.12" style="white-space:pre">B024</text>
<text x="357" y="607.7" font-family="Liberation Sans" font-size="9" fill="#000" letter-spacing="0.74" stroke="#000" stroke-width="0.12" style="white-space:pre">High</text>
<text x="424.6" y="627.3" font-family="Liberation Sans" font-size="9" fill="#000" letter-spacing="0.74" stroke="#000" stroke-width="0.12" style="white-space:pre">B020</text>
<text x="490.4" y="627.3" font-family="Liberation Sans" font-size="9" fill="#000" letter-spacing="0.74" stroke="#000" stroke-width="0.12" style="white-space:pre">X7</text>
<text x="584.8" y="517.4" font-family="Liberation Sans" font-size="9" fill="#000" letter-spacing="0.74" stroke="#000" stroke-width="0.12" style="white-space:pre">B010</text>
<text x="644.8" y="527.4" font-family="Liberation Sans" font-size="9" fill="#000" letter-spacing="0.74" stroke="#000" stroke-width="0.12" style="white-space:pre">B012</text>
<text x="854.4" y="57.5" font-family="Liberation Sans" font-size="9" fill="#000" letter-spacing="0.74" stroke="#000" stroke-width="0.12" style="white-space:pre">B006</text>
<text x="1069.6" y="57.5" font-family="Liberation Sans" font-size="9" fill="#000" letter-spacing="0.74" stroke="#000" stroke-width="0.12" style="white-space:pre">Q1</text>
<text x="1136.6" y="57.6" font-family="Liberation Sans" font-size="9" fill="#000" letter-spacing="0.74" stroke="#000" stroke-width="0.12" style="white-space:pre">M30 (LOGO! TD amber backlight)</text>
<text x="1276.6" y="57.6" font-family="Liberation Sans" font-size="9" fill="#000" letter-spacing="0.74" stroke="#000" stroke-width="0.12" style="white-space:pre">M28 (LOGO! displays the amber backlight)</text>
<text x="1510.3" y="57.6" font-family="Liberation Sans" font-size="9" fill="#000" letter-spacing="0.74" stroke="#000" stroke-width="0.12" style="white-space:pre">X1</text>
<text x="1244.6" y="107.4" font-family="Liberation Sans" font-size="9" fill="#000" letter-spacing="0.74" stroke="#000" stroke-width="0.12" style="white-space:pre">B008</text>
<text x="1360.2" y="107.4" font-family="Liberation Sans" font-size="9" fill="#000" letter-spacing="0.74" stroke="#000" stroke-width="0.12" style="white-space:pre">X4</text>
<text x="974.7" y="277.4" font-family="Liberation Sans" font-size="9" fill="#000" letter-spacing="0.74" stroke="#000" stroke-width="0.12" style="white-space:pre">B001</text>
<text x="1069.6" y="277.4" font-family="Liberation Sans" font-size="9" fill="#000" letter-spacing="0.74" stroke="#000" stroke-width="0.12" style="white-space:pre">Q2</text>
<text x="1136.6" y="277.5" font-family="Liberation Sans" font-size="9" fill="#000" letter-spacing="0.74" stroke="#000" stroke-width="0.12" style="white-space:pre">M31 (LOGO! TD red backlight)</text>
<text x="1286.6" y="277.5" font-family="Liberation Sans" font-size="9" fill="#000" letter-spacing="0.74" stroke="#000" stroke-width="0.12" style="white-space:pre">M29 (LOGO! displays red backlight)</text>
<text x="1500" y="277.5" font-family="Liberation Sans" font-size="9" fill="#000" letter-spacing="0.74" stroke="#000" stroke-width="0.12" style="white-space:pre">X2</text>
<text x="1184.8" y="327.4" font-family="Liberation Sans" font-size="9" fill="#000" letter-spacing="0.74" stroke="#000" stroke-width="0.12" style="white-space:pre">B009</text>
<text x="1340" y="327.4" font-family="Liberation Sans" font-size="9" fill="#000" letter-spacing="0.74" stroke="#000" stroke-width="0.12" style="white-space:pre">X5</text>
<text x="1079.7" y="527.4" font-family="Liberation Sans" font-size="9" fill="#000" letter-spacing="0.74" stroke="#000" stroke-width="0.12" style="white-space:pre">Q3</text>
<text x="1126.6" y="527.4" font-family="Liberation Sans" font-size="9" fill="#000" letter-spacing="0.74" stroke="#000" stroke-width="0.12" style="white-space:pre">M26 (LOGO! TD white backlight)</text>
<text x="1266.6" y="527.4" font-family="Liberation Sans" font-size="9" fill="#000" letter-spacing="0.74" stroke="#000" stroke-width="0.12" style="white-space:pre">M25 (LOGO! displays white backlight)</text>
<text x="1500" y="527.4" font-family="Liberation Sans" font-size="9" fill="#000" letter-spacing="0.74" stroke="#000" stroke-width="0.12" style="white-space:pre">X3</text>
<text x="1274.6" y="617.4" font-family="Liberation Sans" font-size="9" fill="#000" letter-spacing="0.74" stroke="#000" stroke-width="0.12" style="white-space:pre">B011</text>
<text x="1400.2" y="617.4" font-family="Liberation Sans" font-size="9" fill="#000" letter-spacing="0.74" stroke="#000" stroke-width="0.12" style="white-space:pre">X6</text>
<text x="1350" y="777.3" font-family="Liberation Sans" font-size="9" fill="#000" letter-spacing="0.74" stroke="#000" stroke-width="0.12" style="white-space:pre">Q4</text>
<text x="1440.5" y="767.6" font-family="Liberation Sans" font-size="9" fill="#000" letter-spacing="0.74" stroke="#000" stroke-width="0.12" style="white-space:pre">X8</text>
<text x="1310.3" y="789.8" font-family="Liberation Sans" font-size="9" fill="#000" letter-spacing="0.74" stroke="#000" stroke-width="0.12" style="white-space:pre">B023</text>
<text x="84" y="64" font-family="Liberation Sans" font-size="12" fill="#000" font-weight="bold" textLength="120" lengthAdjust="spacingAndGlyphs" style="white-space:pre">ENGINE CRANK OVER</text>
<text x="96.7" y="204" font-family="Liberation Sans" font-size="12" fill="#000" font-weight="bold" textLength="58.3" lengthAdjust="spacingAndGlyphs" style="white-space:pre">BRAKE ON</text>
<text x="82.6" y="364" font-family="Liberation Sans" font-size="12" fill="#000" font-weight="bold" textLength="66.2" lengthAdjust="spacingAndGlyphs" style="white-space:pre">IN NEUTRAL</text>
<text x="74.7" y="473.8" font-family="Liberation Sans" font-size="12" fill="#000" font-weight="bold" textLength="87.8" lengthAdjust="spacingAndGlyphs" style="white-space:pre">CHARGE LATCH</text>
<text x="83.5" y="564" font-family="Liberation Sans" font-size="12" fill="#000" font-weight="bold" textLength="68.9" lengthAdjust="spacingAndGlyphs" style="white-space:pre">IGNITION ON</text>
<text x="1478.7" y="43.6" font-family="Liberation Sans" font-size="12" fill="#000" font-weight="bold" textLength="62.5" lengthAdjust="spacingAndGlyphs" style="white-space:pre">Per charge</text>
<text x="1491.4" y="263.8" font-family="Liberation Sans" font-size="12" fill="#000" font-weight="bold" textLength="49.8" lengthAdjust="spacingAndGlyphs" style="white-space:pre">HV + pos</text>
<text x="1491.4" y="513.5" font-family="Liberation Sans" font-size="12" fill="#000" font-weight="bold" textLength="47.3" lengthAdjust="spacingAndGlyphs" style="white-space:pre">HV - neg</text>
</g>
<rect x="0" y="0" width="1583" height="27" fill="#aeaeae"/>
<rect x="281" y="0" width="1302" height="2.6" fill="#a7a7a7"/>
<rect x="0" y="26.8" width="1583" height="1" fill="#686868"/>
<rect x="0" y="0" width="281" height="30" fill="#fff"/>
<rect x="0" y="0" width="281" height="2.6" fill="#ff8000"/>
<rect x="281" y="3" width="174.5" height="24.5" fill="#e2e2e2"/>
<rect x="281" y="3" width="1" height="25" fill="#8a8a8a"/>
<rect x="455" y="3" width="1" height="24.5" fill="#6e6e6e"/>
<rect x="9.6" y="9.1" width="3" height="3" fill="none" stroke="#000" stroke-width="1.2"/>
<rect x="9.6" y="16.1" width="3" height="3" fill="none" stroke="#000" stroke-width="1.2"/>
<rect x="18.9" y="9.1" width="3" height="3" fill="none" stroke="#d01010" stroke-width="1.2"/>
<rect x="13" y="10.1" width="5.6" height="1" fill="#000"/>
<rect x="22.6" y="10.1" width="1.6" height="1" fill="#000"/>
<rect x="15" y="10.5" width="1.1" height="5" fill="#d01010"/>
<text x="13.8" y="21.5" font-family="Liberation Sans" font-size="5.8" fill="#000" font-weight="bold" textLength="11.3" lengthAdjust="spacingAndGlyphs" style="white-space:pre">SIM</text>
<text x="29.3" y="17.8" font-family="Liberation Sans" font-size="12" fill="#cf1733" textLength="162.7" lengthAdjust="spacingAndGlyphs" style="white-space:pre">EV HV fail safe battery enable IGNI</text>
<text x="198.7" y="17.8" font-family="Liberation Sans" font-size="12" fill="#cf1733" textLength="59" lengthAdjust="spacingAndGlyphs" style="white-space:pre">CHARGER.lsc</text>
<path d="M267.8,10.8L275.2,17.2M275.2,10.8L267.8,17.2" stroke="#8a8a8a" stroke-width="2.1" fill="none"/>
<rect x="291.6" y="9.1" width="3" height="3" fill="none" stroke="#000" stroke-width="1.2"/>
<rect x="291.6" y="16.1" width="3" height="3" fill="none" stroke="#000" stroke-width="1.2"/>
<rect x="300.9" y="9.1" width="3" height="3" fill="none" stroke="#d01010" stroke-width="1.2"/>
<rect x="295" y="10.1" width="5.6" height="1" fill="#000"/>
<rect x="304.6" y="10.1" width="1.6" height="1" fill="#000"/>
<rect x="297" y="10.5" width="1.1" height="5" fill="#d01010"/>
<text x="295.8" y="21.5" font-family="Liberation Sans" font-size="5.8" fill="#000" font-weight="bold" textLength="11.3" lengthAdjust="spacingAndGlyphs" style="white-space:pre">SIM</text>
<text x="311" y="18" font-family="Liberation Sans" font-size="12" fill="#cf1733" textLength="121" lengthAdjust="spacingAndGlyphs" style="white-space:pre">sequentia shift contral.lsc</text>
<rect x="0" y="796" width="1583" height="65" fill="#f0f0f0"/>
<rect x="0" y="812" width="1583" height="4" fill="#e6e6e6"/>
<rect x="0.5" y="796.5" width="14" height="15" fill="#f0f0f0" stroke="#a9a9a9" stroke-width="1"/>
<path d="M9.3,800.6L5.6,804.2L9.3,807.8" stroke="#000" stroke-width="1.5" fill="none"/>
<rect x="15.5" y="797.5" width="520" height="14" fill="#f0f0f0" stroke="#9c9c9c" stroke-width="1"/>
<rect x="435" y="801" width="1" height="7" fill="#b4b4b4"/>
<rect x="437" y="801" width="1" height="7" fill="#b4b4b4"/>
<rect x="439" y="801" width="1" height="7" fill="#b4b4b4"/>
<rect x="441" y="801" width="1" height="7" fill="#b4b4b4"/>
<path d="M13.8,842.5L10.6,845.3L13.8,848.1M18.0,842.5L14.8,845.3L18.0,848.1" stroke="#000" stroke-width="1.5" fill="none"/>
<path d="M166.6,842.5L163.4,845.3L166.6,848.1M170.8,842.5L167.6,845.3L170.8,848.1" stroke="#000" stroke-width="1.5" fill="none"/>
<rect x="22.4" y="824" width="26" height="40" fill="#efefef"/>
<rect x="22.4" y="824" width="26" height="1.6" fill="#8a8a8a"/>
<rect x="22.4" y="824" width="1.6" height="40" fill="#8a8a8a"/>
<rect x="47.0" y="825" width="1.4" height="40" fill="#fdfdfd"/>
<text x="27.7" y="833.7" font-family="Liberation Sans" font-size="8.5" fill="#777" style="white-space:pre">0</text>
<text x="36.7" y="833.7" font-family="Liberation Sans" font-size="9" fill="#e8103c" font-weight="bold" style="white-space:pre">1</text>
<rect x="25.299999999999997" y="836.5" width="19.7" height="10.7" rx="5.35" fill="#f8f8f8" stroke="#8a8a8a" stroke-width="1"/>
<circle cx="39.7" cy="841.85" r="4.5" fill="#ee1040"/>
<text x="32.2" y="864.3" font-family="Liberation Sans" font-size="12.5" fill="#111" textLength="6.6" lengthAdjust="spacingAndGlyphs" style="white-space:pre">I1</text>
<rect x="48.5" y="824" width="26" height="40" fill="#efefef"/>
<rect x="48.5" y="824" width="26" height="1.6" fill="#8a8a8a"/>
<rect x="48.5" y="824" width="1.6" height="40" fill="#8a8a8a"/>
<rect x="73.1" y="825" width="1.4" height="40" fill="#fdfdfd"/>
<text x="53.8" y="833.7" font-family="Liberation Sans" font-size="8.5" fill="#777" style="white-space:pre">0</text>
<text x="62.8" y="833.7" font-family="Liberation Sans" font-size="9" fill="#e8103c" font-weight="bold" style="white-space:pre">1</text>
<rect x="51.4" y="836.5" width="19.7" height="10.7" rx="5.35" fill="#f8f8f8" stroke="#8a8a8a" stroke-width="1"/>
<circle cx="65.8" cy="841.85" r="4.5" fill="#ee1040"/>
<text x="58.3" y="864.3" font-family="Liberation Sans" font-size="12.5" fill="#111" textLength="6.6" lengthAdjust="spacingAndGlyphs" style="white-space:pre">I5</text>
<rect x="74.6" y="824" width="26" height="40" fill="#efefef"/>
<rect x="74.6" y="824" width="26" height="1.6" fill="#8a8a8a"/>
<rect x="74.6" y="824" width="1.6" height="40" fill="#8a8a8a"/>
<rect x="99.19999999999999" y="825" width="1.4" height="40" fill="#fdfdfd"/>
<text x="79.89999999999999" y="833.7" font-family="Liberation Sans" font-size="8.5" fill="#777" style="white-space:pre">0</text>
<text x="88.89999999999999" y="833.7" font-family="Liberation Sans" font-size="9" fill="#e8103c" font-weight="bold" style="white-space:pre">1</text>
<rect x="77.5" y="836.5" width="19.7" height="10.7" rx="5.35" fill="#f8f8f8" stroke="#8a8a8a" stroke-width="1"/>
<circle cx="91.89999999999999" cy="841.85" r="4.5" fill="#ee1040"/>
<text x="84.39999999999999" y="864.3" font-family="Liberation Sans" font-size="12.5" fill="#111" textLength="6.6" lengthAdjust="spacingAndGlyphs" style="white-space:pre">I6</text>
<rect x="100.70000000000002" y="824" width="26" height="40" fill="#efefef"/>
<rect x="100.70000000000002" y="824" width="26" height="1.6" fill="#8a8a8a"/>
<rect x="100.70000000000002" y="824" width="1.6" height="40" fill="#8a8a8a"/>
<rect x="125.30000000000001" y="825" width="1.4" height="40" fill="#fdfdfd"/>
<text x="106.00000000000001" y="833.7" font-family="Liberation Sans" font-size="8.5" fill="#777" style="white-space:pre">0</text>
<text x="115.00000000000001" y="833.7" font-family="Liberation Sans" font-size="9" fill="#e8103c" font-weight="bold" style="white-space:pre">1</text>
<rect x="103.60000000000002" y="836.5" width="19.7" height="10.7" rx="5.35" fill="#f8f8f8" stroke="#8a8a8a" stroke-width="1"/>
<circle cx="118.00000000000001" cy="841.85" r="4.5" fill="#ee1040"/>
<text x="110.50000000000001" y="864.3" font-family="Liberation Sans" font-size="12.5" fill="#111" textLength="6.6" lengthAdjust="spacingAndGlyphs" style="white-space:pre">I7</text>
<rect x="126.6" y="824" width="25.4" height="40" fill="#f4f4f4"/>
<rect x="126.6" y="824" width="25.4" height="1.6" fill="#fff"/>
<rect x="126.6" y="824" width="1.6" height="40" fill="#fff"/>
<rect x="150.6" y="824" width="1.4" height="40" fill="#9a9a9a"/>
<rect x="134" y="834" width="11.2" height="9.6" fill="#8e8e8e"/>
<rect x="136.2" y="834" width="1" height="9.6" fill="#b9b9b9"/>
<rect x="139.4" y="834" width="1" height="9.6" fill="#b9b9b9"/>
<rect x="142.6" y="834" width="1" height="9.6" fill="#b9b9b9"/>
<rect x="129" y="845" width="20" height="1" fill="#9a9a9a"/>
<text x="136" y="864.3" font-family="Liberation Sans" font-size="12.5" fill="#111" textLength="6.6" lengthAdjust="spacingAndGlyphs" style="white-space:pre">I8</text>
<path d="M186.70000000000002,845.3 C186.70000000000002,842 182.9,840.6 182.9,836.5 A6.4,6.6 0 1 1 195.70000000000002,836.5 C195.70000000000002,840.6 191.9,842 191.9,845.3Z" fill="#f6f000" stroke="#a89c00" stroke-width="0.7"/>
<path d="M186.4,845.8H192.20000000000002V849.2Q192.20000000000002,850.9 189.3,850.9Q186.4,850.9 186.4,849.2Z" fill="#0a0a0a"/>
<path d="M189.3,824.9L189.3,828.3M177.9,836.5L181.5,836.5M200.70000000000002,836.5L197.10000000000002,836.5M180.9,828.5L183.5,830.9M197.70000000000002,828.5L195.10000000000002,830.9M181.10000000000002,844.1L183.5,841.9M197.5,844.1L195.10000000000002,841.9" stroke="#b4aa00" stroke-width="1" fill="none"/>
<text x="179.4" y="864.4" font-family="Liberation Sans" font-size="12" fill="#111" textLength="19.8" lengthAdjust="spacingAndGlyphs" style="white-space:pre">M25</text>
<path d="M215.72000000000003,845.3 C215.72000000000003,842 211.92000000000002,840.6 211.92000000000002,836.5 A6.4,6.6 0 1 1 224.72000000000003,836.5 C224.72000000000003,840.6 220.92000000000002,842 220.92000000000002,845.3Z" fill="#f6f000" stroke="#a89c00" stroke-width="0.7"/>
<path d="M215.42000000000002,845.8H221.22000000000003V849.2Q221.22000000000003,850.9 218.32000000000002,850.9Q215.42000000000002,850.9 215.42000000000002,849.2Z" fill="#0a0a0a"/>
<path d="M218.32000000000002,824.9L218.32000000000002,828.3M206.92000000000002,836.5L210.52,836.5M229.72000000000003,836.5L226.12000000000003,836.5M209.92000000000002,828.5L212.52,830.9M226.72000000000003,828.5L224.12000000000003,830.9M210.12000000000003,844.1L212.52,841.9M226.52,844.1L224.12000000000003,841.9" stroke="#b4aa00" stroke-width="1" fill="none"/>
<text x="208.42000000000002" y="864.4" font-family="Liberation Sans" font-size="12" fill="#111" textLength="19.8" lengthAdjust="spacingAndGlyphs" style="white-space:pre">M26</text>
<path d="M244.74,845.3 C244.74,842 240.94,840.6 240.94,836.5 A6.4,6.6 0 1 1 253.74,836.5 C253.74,840.6 249.94,842 249.94,845.3Z" fill="#7b7b7b" stroke="#666" stroke-width="0.7"/>
<path d="M244.44,845.8H250.24V849.2Q250.24,850.9 247.34,850.9Q244.44,850.9 244.44,849.2Z" fill="#0a0a0a"/>
<text x="237.44" y="864.4" font-family="Liberation Sans" font-size="12" fill="#111" textLength="19.8" lengthAdjust="spacingAndGlyphs" style="white-space:pre">M28</text>
<path d="M273.76,845.3 C273.76,842 269.96000000000004,840.6 269.96000000000004,836.5 A6.4,6.6 0 1 1 282.76,836.5 C282.76,840.6 278.96000000000004,842 278.96000000000004,845.3Z" fill="#f6f000" stroke="#a89c00" stroke-width="0.7"/>
<path d="M273.46000000000004,845.8H279.26V849.2Q279.26,850.9 276.36,850.9Q273.46000000000004,850.9 273.46000000000004,849.2Z" fill="#0a0a0a"/>
<path d="M276.36,824.9L276.36,828.3M264.96000000000004,836.5L268.56,836.5M287.76,836.5L284.16,836.5M267.96000000000004,828.5L270.56,830.9M284.76,828.5L282.16,830.9M268.16,844.1L270.56,841.9M284.56,844.1L282.16,841.9" stroke="#b4aa00" stroke-width="1" fill="none"/>
<text x="266.46000000000004" y="864.4" font-family="Liberation Sans" font-size="12" fill="#111" textLength="19.8" lengthAdjust="spacingAndGlyphs" style="white-space:pre">M29</text>
<path d="M302.78,845.3 C302.78,842 298.98,840.6 298.98,836.5 A6.4,6.6 0 1 1 311.78,836.5 C311.78,840.6 307.98,842 307.98,845.3Z" fill="#7b7b7b" stroke="#666" stroke-width="0.7"/>
<path d="M302.48,845.8H308.28V849.2Q308.28,850.9 305.38,850.9Q302.48,850.9 302.48,849.2Z" fill="#0a0a0a"/>
<text x="295.48" y="864.4" font-family="Liberation Sans" font-size="12" fill="#111" textLength="19.8" lengthAdjust="spacingAndGlyphs" style="white-space:pre">M30</text>
<path d="M331.79999999999995,845.3 C331.79999999999995,842 328.0,840.6 328.0,836.5 A6.4,6.6 0 1 1 340.79999999999995,836.5 C340.79999999999995,840.6 337.0,842 337.0,845.3Z" fill="#f6f000" stroke="#a89c00" stroke-width="0.7"/>
<path d="M331.5,845.8H337.29999999999995V849.2Q337.29999999999995,850.9 334.4,850.9Q331.5,850.9 331.5,849.2Z" fill="#0a0a0a"/>
<path d="M334.4,824.9L334.4,828.3M323.0,836.5L326.59999999999997,836.5M345.79999999999995,836.5L342.2,836.5M326.0,828.5L328.59999999999997,830.9M342.79999999999995,828.5L340.2,830.9M326.2,844.1L328.59999999999997,841.9M342.59999999999997,844.1L340.2,841.9" stroke="#b4aa00" stroke-width="1" fill="none"/>
<text x="324.5" y="864.4" font-family="Liberation Sans" font-size="12" fill="#111" textLength="19.8" lengthAdjust="spacingAndGlyphs" style="white-space:pre">M31</text>
<path d="M360.82,845.3 C360.82,842 357.02000000000004,840.6 357.02000000000004,836.5 A6.4,6.6 0 1 1 369.82,836.5 C369.82,840.6 366.02000000000004,842 366.02000000000004,845.3Z" fill="#7b7b7b" stroke="#666" stroke-width="0.7"/>
<path d="M360.52000000000004,845.8H366.32V849.2Q366.32,850.9 363.42,850.9Q360.52000000000004,850.9 360.52000000000004,849.2Z" fill="#0a0a0a"/>
<text x="357.12" y="864.4" font-family="Liberation Sans" font-size="12" fill="#111" textLength="12.6" lengthAdjust="spacingAndGlyphs" style="white-space:pre">Q1</text>
<path d="M389.84,845.3 C389.84,842 386.04,840.6 386.04,836.5 A6.4,6.6 0 1 1 398.84,836.5 C398.84,840.6 395.04,842 395.04,845.3Z" fill="#f6f000" stroke="#a89c00" stroke-width="0.7"/>
<path d="M389.54,845.8H395.34V849.2Q395.34,850.9 392.44,850.9Q389.54,850.9 389.54,849.2Z" fill="#0a0a0a"/>
<path d="M392.44,824.9L392.44,828.3M381.04,836.5L384.64,836.5M403.84,836.5L400.24,836.5M384.04,828.5L386.64,830.9M400.84,828.5L398.24,830.9M384.24,844.1L386.64,841.9M400.64,844.1L398.24,841.9" stroke="#b4aa00" stroke-width="1" fill="none"/>
<text x="386.14" y="864.4" font-family="Liberation Sans" font-size="12" fill="#111" textLength="12.6" lengthAdjust="spacingAndGlyphs" style="white-space:pre">Q2</text>
<path d="M418.86,845.3 C418.86,842 415.06000000000006,840.6 415.06000000000006,836.5 A6.4,6.6 0 1 1 427.86,836.5 C427.86,840.6 424.06000000000006,842 424.06000000000006,845.3Z" fill="#f6f000" stroke="#a89c00" stroke-width="0.7"/>
<path d="M418.56000000000006,845.8H424.36V849.2Q424.36,850.9 421.46000000000004,850.9Q418.56000000000006,850.9 418.56000000000006,849.2Z" fill="#0a0a0a"/>
<path d="M421.46000000000004,824.9L421.46000000000004,828.3M410.06000000000006,836.5L413.66,836.5M432.86,836.5L429.26000000000005,836.5M413.06000000000006,828.5L415.66,830.9M429.86,828.5L427.26000000000005,830.9M413.26000000000005,844.1L415.66,841.9M429.66,844.1L427.26000000000005,841.9" stroke="#b4aa00" stroke-width="1" fill="none"/>
<text x="415.16" y="864.4" font-family="Liberation Sans" font-size="12" fill="#111" textLength="12.6" lengthAdjust="spacingAndGlyphs" style="white-space:pre">Q3</text>
<path d="M447.88,845.3 C447.88,842 444.08000000000004,840.6 444.08000000000004,836.5 A6.4,6.6 0 1 1 456.88,836.5 C456.88,840.6 453.08000000000004,842 453.08000000000004,845.3Z" fill="#7b7b7b" stroke="#666" stroke-width="0.7"/>
<path d="M447.58000000000004,845.8H453.38V849.2Q453.38,850.9 450.48,850.9Q447.58000000000004,850.9 447.58000000000004,849.2Z" fill="#0a0a0a"/>
<text x="444.18" y="864.4" font-family="Liberation Sans" font-size="12" fill="#111" textLength="12.6" lengthAdjust="spacingAndGlyphs" style="white-space:pre">Q4</text>
<circle cx="477.6" cy="848.5" r="2.7" fill="#22cc30"/>
<path d="M479.6,838.8L484.2,837.6L489,842.4L488.6,847.2L484,848.2L479.4,843.6Z" fill="#8492a6" stroke="#5a6678" stroke-width="0.7"/>
<path d="M476.2,836L490.6,850.8" stroke="#4a5364" stroke-width="0.8"/>
<rect x="494.5" y="833.5" width="16" height="21" fill="#fff" stroke="#8a9ab4" stroke-width="1"/>
<path d="M499.2,836.8L512,844L499.2,851.2Z" fill="#12b040"/>
<rect x="507" y="571" width="695" height="290" fill="#f0f0f0"/>
<rect x="507" y="571" width="695" height="27" fill="#fff"/>
<rect x="507" y="571" width="695" height="1" fill="#8c8c8c"/>
<rect x="507" y="571" width="1" height="290" fill="#6e6e6e"/>
<rect x="1201" y="571" width="1" height="290" fill="#8c8c8c"/>
<text x="511.7" y="587.7" font-family="Liberation Sans" font-size="12" fill="#16162a" textLength="73.4" lengthAdjust="spacingAndGlyphs" style="white-space:pre">Message texts</text>
<path d="M1182.5,579.5L1191.5,588.5M1191.5,579.5L1182.5,588.5" stroke="#111" stroke-width="1.1" fill="none"/>
<rect x="508" y="619.6" width="693" height="1" fill="#d9d9d9"/>
<rect x="508" y="620.6" width="344" height="2.8" fill="#fbfbfb"/>
<rect x="857" y="620.6" width="344" height="2.8" fill="#fbfbfb"/>
<rect x="510.5" y="600.5" width="53.60000000000002" height="19.5" fill="#f0f0f0" stroke="#d9d9d9" stroke-width="1"/>
<rect x="526" y="601" width="1" height="19" fill="#d9d9d9"/>
<rect x="543" y="601" width="1" height="19" fill="#d9d9d9"/>
<rect x="563.6" y="598.6" width="20.0" height="22" fill="#fff" stroke="#dcdcdc" stroke-width="0.8"/>
<rect x="857.5" y="600.5" width="53.799999999999955" height="19.5" fill="#f0f0f0" stroke="#d9d9d9" stroke-width="1"/>
<rect x="873.5" y="601" width="1" height="19" fill="#d9d9d9"/>
<rect x="890.6" y="601" width="1" height="19" fill="#d9d9d9"/>
<rect x="910.8" y="598.6" width="19.600000000000023" height="22" fill="#fff" stroke="#dcdcdc" stroke-width="0.8"/>
<text x="515.8" y="614.8" font-family="Liberation Sans" font-size="12" fill="#e0314f" textLength="5.8" lengthAdjust="spacingAndGlyphs" style="white-space:pre">0</text>
<text x="532.3" y="614.8" font-family="Liberation Sans" font-size="12" fill="#e0314f" textLength="5.8" lengthAdjust="spacingAndGlyphs" style="white-space:pre">5</text>
<text x="548.6" y="614.8" font-family="Liberation Sans" font-size="12" fill="#4a7cc4" textLength="10.8" lengthAdjust="spacingAndGlyphs" style="white-space:pre">10</text>
<text x="568.6" y="613.2" font-family="Liberation Sans" font-size="12" fill="#c2202e" textLength="10" lengthAdjust="spacingAndGlyphs" style="white-space:pre">11</text>
<rect x="566.5" y="601.5" width="15" height="17" fill="none" stroke="#111" stroke-width="1" stroke-dasharray="1,1.2"/>
<text x="862.8" y="614.8" font-family="Liberation Sans" font-size="12" fill="#e0314f" textLength="5.8" lengthAdjust="spacingAndGlyphs" style="white-space:pre">0</text>
<text x="879.4" y="614.8" font-family="Liberation Sans" font-size="12" fill="#e0314f" textLength="5.8" lengthAdjust="spacingAndGlyphs" style="white-space:pre">5</text>
<text x="896" y="614.8" font-family="Liberation Sans" font-size="12" fill="#4a7cc4" textLength="10.8" lengthAdjust="spacingAndGlyphs" style="white-space:pre">10</text>
<text x="915.6" y="613.2" font-family="Liberation Sans" font-size="12" fill="#c2202e" textLength="10" lengthAdjust="spacingAndGlyphs" style="white-space:pre">11</text>
<rect x="852" y="621" width="1" height="241" fill="#dadada"/>
<rect x="855" y="621" width="1" height="241" fill="#dadada"/>
<rect x="513.1" y="629.5" width="336.0" height="240" fill="none" stroke="#c6c6c6" stroke-width="1"/>
<rect x="514.1" y="630.5" width="334.0" height="240" fill="none" stroke="#fafafa" stroke-width="1"/>
<rect x="517.6" y="627" width="72" height="6" fill="#f0f0f0"/>
<text x="519.2" y="634.9" font-family="Liberation Sans" font-size="12" fill="#16162a" textLength="68" lengthAdjust="spacingAndGlyphs" style="white-space:pre">LOGO! Display</text>
<text x="520.4" y="656.7" font-family="Liberation Sans" font-size="12" fill="#16162a" textLength="31.8" lengthAdjust="spacingAndGlyphs" style="white-space:pre">Details</text>
<path d="M559.3000000000001,646H566.3000000000001L569.6,649V658.6Q569.6,659.8 568.3000000000001,659.8H560.3000000000001Q559.3000000000001,659.8 559.3000000000001,658.8Z" fill="#939393"/>
<rect x="561.1" y="649.4" width="4.6" height="0.8" fill="#a9a9a9"/>
<rect x="561.1" y="651.6" width="4.6" height="0.8" fill="#a9a9a9"/>
<rect x="561.1" y="653.8" width="4.6" height="0.8" fill="#a9a9a9"/>
<path d="M566.7,655.8L575.5000000000001,645.6L577.3000000000001,647.4L568.9000000000001,657.4L566.5000000000001,657.8Z" fill="#8d8d8d"/>
<path d="M584.9000000000001,648L588.8000000000001,645.8V650.2Z" fill="#000"/><ellipse cx="594.6" cy="647.9" rx="4.3" ry="2.9" fill="#000"/>
<path d="M586.9000000000001,655.9L590.8000000000001,653.7V658.1Z" fill="#000"/><ellipse cx="596.7" cy="655.9" rx="4.4" ry="2.9" fill="#000"/>
<rect x="859.9" y="629.5" width="335.80000000000007" height="240" fill="none" stroke="#c6c6c6" stroke-width="1"/>
<rect x="860.9" y="630.5" width="333.80000000000007" height="240" fill="none" stroke="#fafafa" stroke-width="1"/>
<rect x="864.4" y="627" width="50.2" height="6" fill="#f0f0f0"/>
<text x="866.0" y="634.9" font-family="Liberation Sans" font-size="12" fill="#16162a" textLength="46.2" lengthAdjust="spacingAndGlyphs" style="white-space:pre">LOGO! TD</text>
<text x="867.1999999999999" y="656.7" font-family="Liberation Sans" font-size="12" fill="#16162a" textLength="31.8" lengthAdjust="spacingAndGlyphs" style="white-space:pre">Details</text>
<path d="M906.1,646H913.1L916.4,649V658.6Q916.4,659.8 915.1,659.8H907.1Q906.1,659.8 906.1,658.8Z" fill="#939393"/>
<rect x="907.9" y="649.4" width="4.6" height="0.8" fill="#a9a9a9"/>
<rect x="907.9" y="651.6" width="4.6" height="0.8" fill="#a9a9a9"/>
<rect x="907.9" y="653.8" width="4.6" height="0.8" fill="#a9a9a9"/>
<path d="M913.5,655.8L922.3000000000001,645.6L924.1,647.4L915.7,657.4L913.3000000000001,657.8Z" fill="#8d8d8d"/>
<path d="M931.7,648L935.6,645.8V650.2Z" fill="#000"/><ellipse cx="941.4" cy="647.9" rx="4.3" ry="2.9" fill="#000"/>
<path d="M933.7,655.9L937.6,653.7V658.1Z" fill="#000"/><ellipse cx="943.5" cy="655.9" rx="4.4" ry="2.9" fill="#000"/>
<rect x="553" y="670" width="256" height="195" fill="#fe0000"/>
<rect x="568" y="671" width="1" height="191" fill="#ffdcdc"/>
<rect x="584" y="671" width="1" height="191" fill="#ffdcdc"/>
<rect x="600" y="671" width="1" height="191" fill="#ffdcdc"/>
<rect x="616" y="671" width="1" height="191" fill="#ffdcdc"/>
<rect x="632" y="671" width="1" height="191" fill="#ffdcdc"/>
<rect x="648" y="671" width="1" height="191" fill="#ffdcdc"/>
<rect x="664" y="671" width="1" height="191" fill="#ffdcdc"/>
<rect x="680" y="671" width="1" height="191" fill="#ffdcdc"/>
<rect x="696" y="671" width="1" height="191" fill="#ffdcdc"/>
<rect x="712" y="671" width="1" height="191" fill="#ffdcdc"/>
<rect x="728" y="671" width="1" height="191" fill="#ffdcdc"/>
<rect x="744" y="671" width="1" height="191" fill="#ffdcdc"/>
<rect x="760" y="671" width="1" height="191" fill="#ffdcdc"/>
<rect x="776" y="671" width="1" height="191" fill="#ffdcdc"/>
<rect x="792" y="671" width="1" height="191" fill="#ffdcdc"/>
<rect x="554" y="701" width="254" height="1" fill="#ffdcdc"/>
<rect x="554" y="733" width="254" height="1" fill="#ffdcdc"/>
<rect x="554" y="765" width="254" height="1" fill="#ffdcdc"/>
<rect x="554" y="797" width="254" height="1" fill="#ffdcdc"/>
<rect x="554" y="829" width="254" height="1" fill="#ffdcdc"/>
<rect x="554" y="861" width="254" height="1" fill="#ffdcdc"/>
<rect x="553" y="670" width="256" height="1" fill="#200000"/>
<rect x="553" y="670" width="1" height="192" fill="#200000"/>
<rect x="808" y="670" width="1" height="192" fill="#200000"/>
<rect x="568" y="671" width="1" height="30" fill="#ffb43a"/>
<rect x="554" y="701" width="15" height="1" fill="#ffe25a"/>
<text x="592.5" y="721.7" font-family="Liberation Sans" font-size="12" fill="#6c0000" stroke="#6c0000" stroke-width="0.2" text-anchor="middle" transform="translate(592.5,0) scale(0.82,1) translate(-592.5,0)">H</text>
<text x="608.5" y="721.7" font-family="Liberation Sans" font-size="12" fill="#6c0000" stroke="#6c0000" stroke-width="0.2" text-anchor="middle" transform="translate(608.5,0) scale(0.82,1) translate(-608.5,0)">I</text>
<text x="624.5" y="721.7" font-family="Liberation Sans" font-size="12" fill="#6c0000" stroke="#6c0000" stroke-width="0.2" text-anchor="middle" transform="translate(624.5,0) scale(0.82,1) translate(-624.5,0)">G</text>
<text x="640.5" y="721.7" font-family="Liberation Sans" font-size="12" fill="#6c0000" stroke="#6c0000" stroke-width="0.2" text-anchor="middle" transform="translate(640.5,0) scale(0.82,1) translate(-640.5,0)">H</text>
<text x="672.5" y="721.7" font-family="Liberation Sans" font-size="12" fill="#6c0000" stroke="#6c0000" stroke-width="0.2" text-anchor="middle" transform="translate(672.5,0) scale(0.82,1) translate(-672.5,0)">V</text>
<text x="688.5" y="721.7" font-family="Liberation Sans" font-size="12" fill="#6c0000" stroke="#6c0000" stroke-width="0.2" text-anchor="middle" transform="translate(688.5,0) scale(0.82,1) translate(-688.5,0)">O</text>
<text x="704.5" y="721.7" font-family="Liberation Sans" font-size="12" fill="#6c0000" stroke="#6c0000" stroke-width="0.2" text-anchor="middle" transform="translate(704.5,0) scale(0.82,1) translate(-704.5,0)">L</text>
<text x="720.5" y="721.7" font-family="Liberation Sans" font-size="12" fill="#6c0000" stroke="#6c0000" stroke-width="0.2" text-anchor="middle" transform="translate(720.5,0) scale(0.82,1) translate(-720.5,0)">T</text>
<text x="736.5" y="721.7" font-family="Liberation Sans" font-size="12" fill="#6c0000" stroke="#6c0000" stroke-width="0.2" text-anchor="middle" transform="translate(736.5,0) scale(0.82,1) translate(-736.5,0)">A</text>
<text x="752.5" y="721.7" font-family="Liberation Sans" font-size="12" fill="#6c0000" stroke="#6c0000" stroke-width="0.2" text-anchor="middle" transform="translate(752.5,0) scale(0.82,1) translate(-752.5,0)">G</text>
<text x="768.5" y="721.7" font-family="Liberation Sans" font-size="12" fill="#6c0000" stroke="#6c0000" stroke-width="0.2" text-anchor="middle" transform="translate(768.5,0) scale(0.82,1) translate(-768.5,0)">E</text>
<text x="608.5" y="753.7" font-family="Liberation Sans" font-size="12" fill="#6c0000" stroke="#6c0000" stroke-width="0.2" text-anchor="middle" transform="translate(608.5,0) scale(0.82,1) translate(-608.5,0)">P</text>
<text x="624.5" y="753.7" font-family="Liberation Sans" font-size="12" fill="#6c0000" stroke="#6c0000" stroke-width="0.2" text-anchor="middle" transform="translate(624.5,0) scale(0.82,1) translate(-624.5,0)">R</text>
<text x="640.5" y="753.7" font-family="Liberation Sans" font-size="12" fill="#6c0000" stroke="#6c0000" stroke-width="0.2" text-anchor="middle" transform="translate(640.5,0) scale(0.82,1) translate(-640.5,0)">E</text>
<text x="656.5" y="753.7" font-family="Liberation Sans" font-size="12" fill="#6c0000" stroke="#6c0000" stroke-width="0.2" text-anchor="middle" transform="translate(656.5,0) scale(0.82,1) translate(-656.5,0)">S</text>
<text x="672.5" y="753.7" font-family="Liberation Sans" font-size="12" fill="#6c0000" stroke="#6c0000" stroke-width="0.2" text-anchor="middle" transform="translate(672.5,0) scale(0.82,1) translate(-672.5,0)">S</text>
<text x="688.5" y="753.7" font-family="Liberation Sans" font-size="12" fill="#6c0000" stroke="#6c0000" stroke-width="0.2" text-anchor="middle" transform="translate(688.5,0) scale(0.82,1) translate(-688.5,0)">E</text>
<text x="704.5" y="753.7" font-family="Liberation Sans" font-size="12" fill="#6c0000" stroke="#6c0000" stroke-width="0.2" text-anchor="middle" transform="translate(704.5,0) scale(0.82,1) translate(-704.5,0)">N</text>
<text x="720.5" y="753.7" font-family="Liberation Sans" font-size="12" fill="#6c0000" stroke="#6c0000" stroke-width="0.2" text-anchor="middle" transform="translate(720.5,0) scale(0.82,1) translate(-720.5,0)">T</text>
<text x="752.5" y="753.7" font-family="Liberation Sans" font-size="12" fill="#6c0000" stroke="#6c0000" stroke-width="0.2" text-anchor="middle" transform="translate(752.5,0) scale(0.82,1) translate(-752.5,0)">T</text>
<text x="768.5" y="753.7" font-family="Liberation Sans" font-size="12" fill="#6c0000" stroke="#6c0000" stroke-width="0.2" text-anchor="middle" transform="translate(768.5,0) scale(0.82,1) translate(-768.5,0)">O</text>
<text x="608.5" y="785.7" font-family="Liberation Sans" font-size="12" fill="#6c0000" stroke="#6c0000" stroke-width="0.2" text-anchor="middle" transform="translate(608.5,0) scale(0.82,1) translate(-608.5,0)">D</text>
<text x="624.5" y="785.7" font-family="Liberation Sans" font-size="12" fill="#6c0000" stroke="#6c0000" stroke-width="0.2" text-anchor="middle" transform="translate(624.5,0) scale(0.82,1) translate(-624.5,0)">R</text>
<text x="640.5" y="785.7" font-family="Liberation Sans" font-size="12" fill="#6c0000" stroke="#6c0000" stroke-width="0.2" text-anchor="middle" transform="translate(640.5,0) scale(0.82,1) translate(-640.5,0)">I</text>
<text x="656.5" y="785.7" font-family="Liberation Sans" font-size="12" fill="#6c0000" stroke="#6c0000" stroke-width="0.2" text-anchor="middle" transform="translate(656.5,0) scale(0.82,1) translate(-656.5,0)">V</text>
<text x="672.5" y="785.7" font-family="Liberation Sans" font-size="12" fill="#6c0000" stroke="#6c0000" stroke-width="0.2" text-anchor="middle" transform="translate(672.5,0) scale(0.82,1) translate(-672.5,0)">E</text>
<text x="704.5" y="785.7" font-family="Liberation Sans" font-size="12" fill="#6c0000" stroke="#6c0000" stroke-width="0.2" text-anchor="middle" transform="translate(704.5,0) scale(0.82,1) translate(-704.5,0)">M</text>
<text x="720.5" y="785.7" font-family="Liberation Sans" font-size="12" fill="#6c0000" stroke="#6c0000" stroke-width="0.2" text-anchor="middle" transform="translate(720.5,0) scale(0.82,1) translate(-720.5,0)">O</text>
<text x="736.5" y="785.7" font-family="Liberation Sans" font-size="12" fill="#6c0000" stroke="#6c0000" stroke-width="0.2" text-anchor="middle" transform="translate(736.5,0) scale(0.82,1) translate(-736.5,0)">T</text>
<text x="752.5" y="785.7" font-family="Liberation Sans" font-size="12" fill="#6c0000" stroke="#6c0000" stroke-width="0.2" text-anchor="middle" transform="translate(752.5,0) scale(0.82,1) translate(-752.5,0)">O</text>
<text x="768.5" y="785.7" font-family="Liberation Sans" font-size="12" fill="#6c0000" stroke="#6c0000" stroke-width="0.2" text-anchor="middle" transform="translate(768.5,0) scale(0.82,1) translate(-768.5,0)">R</text>
<rect x="868" y="670" width="320" height="195" fill="#fe0000"/>
<rect x="883" y="671" width="1" height="191" fill="#ffdcdc"/>
<rect x="899" y="671" width="1" height="191" fill="#ffdcdc"/>
<rect x="915" y="671" width="1" height="191" fill="#ffdcdc"/>
<rect x="931" y="671" width="1" height="191" fill="#ffdcdc"/>
<rect x="947" y="671" width="1" height="191" fill="#ffdcdc"/>
<rect x="963" y="671" width="1" height="191" fill="#ffdcdc"/>
<rect x="979" y="671" width="1" height="191" fill="#ffdcdc"/>
<rect x="995" y="671" width="1" height="191" fill="#ffdcdc"/>
<rect x="1011" y="671" width="1" height="191" fill="#ffdcdc"/>
<rect x="1027" y="671" width="1" height="191" fill="#ffdcdc"/>
<rect x="1043" y="671" width="1" height="191" fill="#ffdcdc"/>
<rect x="1059" y="671" width="1" height="191" fill="#ffdcdc"/>
<rect x="1075" y="671" width="1" height="191" fill="#ffdcdc"/>
<rect x="1091" y="671" width="1" height="191" fill="#ffdcdc"/>
<rect x="1107" y="671" width="1" height="191" fill="#ffdcdc"/>
<rect x="1123" y="671" width="1" height="191" fill="#ffdcdc"/>
<rect x="1139" y="671" width="1" height="191" fill="#ffdcdc"/>
<rect x="1155" y="671" width="1" height="191" fill="#ffdcdc"/>
<rect x="1171" y="671" width="1" height="191" fill="#ffdcdc"/>
<rect x="869" y="701" width="318" height="1" fill="#ffdcdc"/>
<rect x="869" y="733" width="318" height="1" fill="#ffdcdc"/>
<rect x="869" y="765" width="318" height="1" fill="#ffdcdc"/>
<rect x="869" y="797" width="318" height="1" fill="#ffdcdc"/>
<rect x="869" y="829" width="318" height="1" fill="#ffdcdc"/>
<rect x="869" y="861" width="318" height="1" fill="#ffdcdc"/>
<rect x="868" y="670" width="320" height="1" fill="#200000"/>
<rect x="868" y="670" width="1" height="192" fill="#200000"/>
<rect x="1187" y="670" width="1" height="192" fill="#200000"/>
<rect x="883" y="671" width="1" height="30" fill="#ffb43a"/>
<rect x="869" y="701" width="15" height="1" fill="#ffe25a"/>
<text x="907.5" y="721.7" font-family="Liberation Sans" font-size="12" fill="#6c0000" stroke="#6c0000" stroke-width="0.2" text-anchor="middle" transform="translate(907.5,0) scale(0.82,1) translate(-907.5,0)">H</text>
<text x="923.5" y="721.7" font-family="Liberation Sans" font-size="12" fill="#6c0000" stroke="#6c0000" stroke-width="0.2" text-anchor="middle" transform="translate(923.5,0) scale(0.82,1) translate(-923.5,0)">I</text>
<text x="939.5" y="721.7" font-family="Liberation Sans" font-size="12" fill="#6c0000" stroke="#6c0000" stroke-width="0.2" text-anchor="middle" transform="translate(939.5,0) scale(0.82,1) translate(-939.5,0)">G</text>
<text x="955.5" y="721.7" font-family="Liberation Sans" font-size="12" fill="#6c0000" stroke="#6c0000" stroke-width="0.2" text-anchor="middle" transform="translate(955.5,0) scale(0.82,1) translate(-955.5,0)">H</text>
<text x="987.5" y="721.7" font-family="Liberation Sans" font-size="12" fill="#6c0000" stroke="#6c0000" stroke-width="0.2" text-anchor="middle" transform="translate(987.5,0) scale(0.82,1) translate(-987.5,0)">V</text>
<text x="1003.5" y="721.7" font-family="Liberation Sans" font-size="12" fill="#6c0000" stroke="#6c0000" stroke-width="0.2" text-anchor="middle" transform="translate(1003.5,0) scale(0.82,1) translate(-1003.5,0)">O</text>
<text x="1019.5" y="721.7" font-family="Liberation Sans" font-size="12" fill="#6c0000" stroke="#6c0000" stroke-width="0.2" text-anchor="middle" transform="translate(1019.5,0) scale(0.82,1) translate(-1019.5,0)">L</text>
<text x="1035.5" y="721.7" font-family="Liberation Sans" font-size="12" fill="#6c0000" stroke="#6c0000" stroke-width="0.2" text-anchor="middle" transform="translate(1035.5,0) scale(0.82,1) translate(-1035.5,0)">T</text>
<text x="1051.5" y="721.7" font-family="Liberation Sans" font-size="12" fill="#6c0000" stroke="#6c0000" stroke-width="0.2" text-anchor="middle" transform="translate(1051.5,0) scale(0.82,1) translate(-1051.5,0)">A</text>
<text x="1067.5" y="721.7" font-family="Liberation Sans" font-size="12" fill="#6c0000" stroke="#6c0000" stroke-width="0.2" text-anchor="middle" transform="translate(1067.5,0) scale(0.82,1) translate(-1067.5,0)">G</text>
<text x="1083.5" y="721.7" font-family="Liberation Sans" font-size="12" fill="#6c0000" stroke="#6c0000" stroke-width="0.2" text-anchor="middle" transform="translate(1083.5,0) scale(0.82,1) translate(-1083.5,0)">E</text>
<text x="923.5" y="753.7" font-family="Liberation Sans" font-size="12" fill="#6c0000" stroke="#6c0000" stroke-width="0.2" text-anchor="middle" transform="translate(923.5,0) scale(0.82,1) translate(-923.5,0)">P</text>
<text x="939.5" y="753.7" font-family="Liberation Sans" font-size="12" fill="#6c0000" stroke="#6c0000" stroke-width="0.2" text-anchor="middle" transform="translate(939.5,0) scale(0.82,1) translate(-939.5,0)">R</text>
<text x="955.5" y="753.7" font-family="Liberation Sans" font-size="12" fill="#6c0000" stroke="#6c0000" stroke-width="0.2" text-anchor="middle" transform="translate(955.5,0) scale(0.82,1) translate(-955.5,0)">E</text>
<text x="971.5" y="753.7" font-family="Liberation Sans" font-size="12" fill="#6c0000" stroke="#6c0000" stroke-width="0.2" text-anchor="middle" transform="translate(971.5,0) scale(0.82,1) translate(-971.5,0)">S</text>
<text x="987.5" y="753.7" font-family="Liberation Sans" font-size="12" fill="#6c0000" stroke="#6c0000" stroke-width="0.2" text-anchor="middle" transform="translate(987.5,0) scale(0.82,1) translate(-987.5,0)">S</text>
<text x="1003.5" y="753.7" font-family="Liberation Sans" font-size="12" fill="#6c0000" stroke="#6c0000" stroke-width="0.2" text-anchor="middle" transform="translate(1003.5,0) scale(0.82,1) translate(-1003.5,0)">E</text>
<text x="1019.5" y="753.7" font-family="Liberation Sans" font-size="12" fill="#6c0000" stroke="#6c0000" stroke-width="0.2" text-anchor="middle" transform="translate(1019.5,0) scale(0.82,1) translate(-1019.5,0)">N</text>
<text x="1035.5" y="753.7" font-family="Liberation Sans" font-size="12" fill="#6c0000" stroke="#6c0000" stroke-width="0.2" text-anchor="middle" transform="translate(1035.5,0) scale(0.82,1) translate(-1035.5,0)">T</text>
<text x="1067.5" y="753.7" font-family="Liberation Sans" font-size="12" fill="#6c0000" stroke="#6c0000" stroke-width="0.2" text-anchor="middle" transform="translate(1067.5,0) scale(0.82,1) translate(-1067.5,0)">T</text>
<text x="1083.5" y="753.7" font-family="Liberation Sans" font-size="12" fill="#6c0000" stroke="#6c0000" stroke-width="0.2" text-anchor="middle" transform="translate(1083.5,0) scale(0.82,1) translate(-1083.5,0)">O</text>
<text x="923.5" y="785.7" font-family="Liberation Sans" font-size="12" fill="#6c0000" stroke="#6c0000" stroke-width="0.2" text-anchor="middle" transform="translate(923.5,0) scale(0.82,1) translate(-923.5,0)">D</text>
<text x="939.5" y="785.7" font-family="Liberation Sans" font-size="12" fill="#6c0000" stroke="#6c0000" stroke-width="0.2" text-anchor="middle" transform="translate(939.5,0) scale(0.82,1) translate(-939.5,0)">R</text>
<text x="955.5" y="785.7" font-family="Liberation Sans" font-size="12" fill="#6c0000" stroke="#6c0000" stroke-width="0.2" text-anchor="middle" transform="translate(955.5,0) scale(0.82,1) translate(-955.5,0)">I</text>
<text x="971.5" y="785.7" font-family="Liberation Sans" font-size="12" fill="#6c0000" stroke="#6c0000" stroke-width="0.2" text-anchor="middle" transform="translate(971.5,0) scale(0.82,1) translate(-971.5,0)">V</text>
<text x="987.5" y="785.7" font-family="Liberation Sans" font-size="12" fill="#6c0000" stroke="#6c0000" stroke-width="0.2" text-anchor="middle" transform="translate(987.5,0) scale(0.82,1) translate(-987.5,0)">E</text>
<text x="1019.5" y="785.7" font-family="Liberation Sans" font-size="12" fill="#6c0000" stroke="#6c0000" stroke-width="0.2" text-anchor="middle" transform="translate(1019.5,0) scale(0.82,1) translate(-1019.5,0)">M</text>
<text x="1035.5" y="785.7" font-family="Liberation Sans" font-size="12" fill="#6c0000" stroke="#6c0000" stroke-width="0.2" text-anchor="middle" transform="translate(1035.5,0) scale(0.82,1) translate(-1035.5,0)">O</text>
<text x="1051.5" y="785.7" font-family="Liberation Sans" font-size="12" fill="#6c0000" stroke="#6c0000" stroke-width="0.2" text-anchor="middle" transform="translate(1051.5,0) scale(0.82,1) translate(-1051.5,0)">T</text>
<text x="1067.5" y="785.7" font-family="Liberation Sans" font-size="12" fill="#6c0000" stroke="#6c0000" stroke-width="0.2" text-anchor="middle" transform="translate(1067.5,0) scale(0.82,1) translate(-1067.5,0)">O</text>
<text x="1083.5" y="785.7" font-family="Liberation Sans" font-size="12" fill="#6c0000" stroke="#6c0000" stroke-width="0.2" text-anchor="middle" transform="translate(1083.5,0) scale(0.82,1) translate(-1083.5,0)">R</text>
</g>
</svg>
</body></html>
